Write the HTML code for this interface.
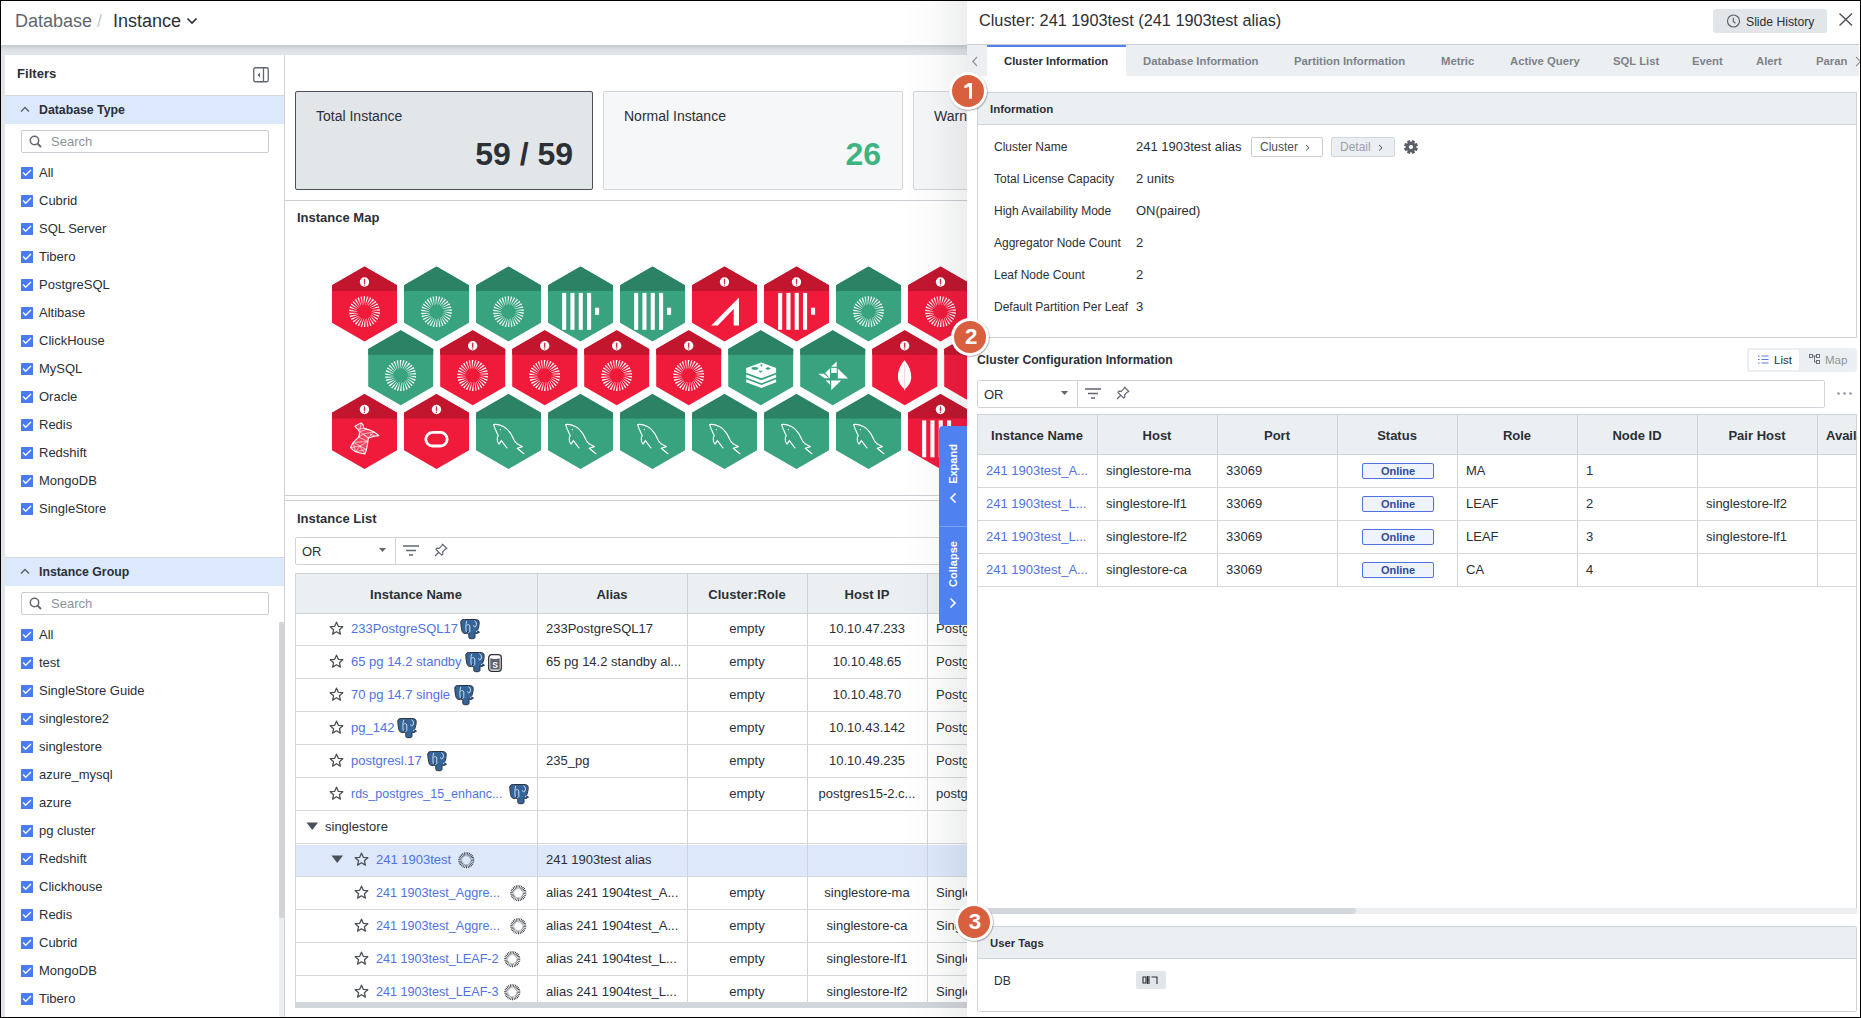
<!DOCTYPE html><html><head><meta charset="utf-8"><style>
*{box-sizing:border-box;margin:0;padding:0}
html,body{width:1861px;height:1018px;overflow:hidden;background:#fff}
body{position:relative;font-family:"Liberation Sans",sans-serif;color:#2b2f36}
.abs{position:absolute}
.t{position:absolute;white-space:nowrap}
.b{font-weight:bold}
.frame{position:absolute;left:0;top:0;width:1861px;height:1018px;border:1px solid #000;z-index:100;pointer-events:none}
.cb{position:absolute;width:12px;height:12px;background:#4a7cf0;border-radius:0.5px}
.lbl{position:absolute;font-size:13px;height:20px;line-height:20px;white-space:nowrap;color:#2b2f36}
</style></head><body>
<div class="frame"></div>
<div class="t" style="left:15px;top:10px;height:22px;line-height:22px;font-size:18px;color:#5f6670">Database</div>
<div class="t" style="left:97px;top:10px;height:22px;line-height:22px;font-size:18px;color:#c3c7cd">/</div>
<div class="t" style="left:113px;top:10px;height:22px;line-height:22px;font-size:18px;color:#2b3038">Instance</div>
<svg class="abs" style="left:185px;top:16px" width="14" height="10"><path d="M2.5 2.5 L7 7 L11.5 2.5" fill="none" stroke="#2b3038" stroke-width="1.6"/></svg>
<div class="abs" style="left:0;top:45px;width:1861px;height:10px;background:linear-gradient(#c6c9cd,#dfe2e5 50%,#e3e6e9)"></div>
<div class="abs" style="left:0;top:55px;width:5px;height:963px;background:#e3e6e9"></div>
<div class="abs" style="left:5px;top:55px;width:279px;height:963px;background:#fff"></div>
<div class="abs" style="left:284px;top:55px;width:1px;height:963px;background:#cfd2d7"></div>
<div class="t b" style="left:17px;top:64px;height:20px;line-height:20px;font-size:13.1px;color:#2b2f36">Filters</div>
<svg class="abs" style="left:253px;top:67px" width="16" height="16"><rect x="0.75" y="0.75" width="14.5" height="14" rx="1.5" fill="none" stroke="#5f6670" stroke-width="1.3"/><line x1="10.5" y1="1" x2="10.5" y2="15" stroke="#5f6670" stroke-width="1.3"/><path d="M7 5.5 L4.5 8 L7 10.5Z" fill="#5f6670"/></svg>
<div class="abs" style="left:5px;top:95px;width:279px;height:1px;background:#d5d8dc"></div>
<div class="abs" style="left:5px;top:96px;width:279px;height:28px;background:#dce8fc"></div>
<svg class="abs" style="left:19px;top:105px" width="12" height="8"><path d="M2 6.5 L6 2.5 L10 6.5" fill="none" stroke="#5f6670" stroke-width="1.5"/></svg>
<div class="t b" style="left:39px;top:100px;height:20px;line-height:20px;font-size:12.3px;color:#2b2f36">Database Type</div>
<div class="abs" style="left:21px;top:130px;width:248px;height:23px;border:1px solid #c9ccd1;border-radius:2px;background:#fff"></div>
<svg class="abs" style="left:29px;top:135px" width="14" height="14"><circle cx="5.5" cy="5.5" r="4.2" fill="none" stroke="#5f6670" stroke-width="1.5"/><line x1="8.6" y1="8.6" x2="12" y2="12" stroke="#5f6670" stroke-width="1.8"/></svg>
<div class="t" style="left:51px;top:131px;height:21px;line-height:21px;font-size:13px;color:#8d939b">Search</div>
<div class="cb" style="left:21px;top:167px"><svg width="12" height="12" style="position:absolute;left:0;top:0"><path d="M2.1 5.6 L4.7 8.2 L9.9 3.1" fill="none" stroke="#fff" stroke-width="1.35"/></svg></div>
<div class="lbl" style="left:39px;top:163px">All</div>
<div class="cb" style="left:21px;top:195px"><svg width="12" height="12" style="position:absolute;left:0;top:0"><path d="M2.1 5.6 L4.7 8.2 L9.9 3.1" fill="none" stroke="#fff" stroke-width="1.35"/></svg></div>
<div class="lbl" style="left:39px;top:191px">Cubrid</div>
<div class="cb" style="left:21px;top:223px"><svg width="12" height="12" style="position:absolute;left:0;top:0"><path d="M2.1 5.6 L4.7 8.2 L9.9 3.1" fill="none" stroke="#fff" stroke-width="1.35"/></svg></div>
<div class="lbl" style="left:39px;top:219px">SQL Server</div>
<div class="cb" style="left:21px;top:251px"><svg width="12" height="12" style="position:absolute;left:0;top:0"><path d="M2.1 5.6 L4.7 8.2 L9.9 3.1" fill="none" stroke="#fff" stroke-width="1.35"/></svg></div>
<div class="lbl" style="left:39px;top:247px">Tibero</div>
<div class="cb" style="left:21px;top:279px"><svg width="12" height="12" style="position:absolute;left:0;top:0"><path d="M2.1 5.6 L4.7 8.2 L9.9 3.1" fill="none" stroke="#fff" stroke-width="1.35"/></svg></div>
<div class="lbl" style="left:39px;top:275px">PostgreSQL</div>
<div class="cb" style="left:21px;top:307px"><svg width="12" height="12" style="position:absolute;left:0;top:0"><path d="M2.1 5.6 L4.7 8.2 L9.9 3.1" fill="none" stroke="#fff" stroke-width="1.35"/></svg></div>
<div class="lbl" style="left:39px;top:303px">Altibase</div>
<div class="cb" style="left:21px;top:335px"><svg width="12" height="12" style="position:absolute;left:0;top:0"><path d="M2.1 5.6 L4.7 8.2 L9.9 3.1" fill="none" stroke="#fff" stroke-width="1.35"/></svg></div>
<div class="lbl" style="left:39px;top:331px">ClickHouse</div>
<div class="cb" style="left:21px;top:363px"><svg width="12" height="12" style="position:absolute;left:0;top:0"><path d="M2.1 5.6 L4.7 8.2 L9.9 3.1" fill="none" stroke="#fff" stroke-width="1.35"/></svg></div>
<div class="lbl" style="left:39px;top:359px">MySQL</div>
<div class="cb" style="left:21px;top:391px"><svg width="12" height="12" style="position:absolute;left:0;top:0"><path d="M2.1 5.6 L4.7 8.2 L9.9 3.1" fill="none" stroke="#fff" stroke-width="1.35"/></svg></div>
<div class="lbl" style="left:39px;top:387px">Oracle</div>
<div class="cb" style="left:21px;top:419px"><svg width="12" height="12" style="position:absolute;left:0;top:0"><path d="M2.1 5.6 L4.7 8.2 L9.9 3.1" fill="none" stroke="#fff" stroke-width="1.35"/></svg></div>
<div class="lbl" style="left:39px;top:415px">Redis</div>
<div class="cb" style="left:21px;top:447px"><svg width="12" height="12" style="position:absolute;left:0;top:0"><path d="M2.1 5.6 L4.7 8.2 L9.9 3.1" fill="none" stroke="#fff" stroke-width="1.35"/></svg></div>
<div class="lbl" style="left:39px;top:443px">Redshift</div>
<div class="cb" style="left:21px;top:475px"><svg width="12" height="12" style="position:absolute;left:0;top:0"><path d="M2.1 5.6 L4.7 8.2 L9.9 3.1" fill="none" stroke="#fff" stroke-width="1.35"/></svg></div>
<div class="lbl" style="left:39px;top:471px">MongoDB</div>
<div class="cb" style="left:21px;top:503px"><svg width="12" height="12" style="position:absolute;left:0;top:0"><path d="M2.1 5.6 L4.7 8.2 L9.9 3.1" fill="none" stroke="#fff" stroke-width="1.35"/></svg></div>
<div class="lbl" style="left:39px;top:499px">SingleStore</div>
<div class="abs" style="left:5px;top:557px;width:279px;height:1px;background:#d5d8dc"></div>
<div class="abs" style="left:5px;top:558px;width:279px;height:28px;background:#dce8fc"></div>
<svg class="abs" style="left:19px;top:567px" width="12" height="8"><path d="M2 6.5 L6 2.5 L10 6.5" fill="none" stroke="#5f6670" stroke-width="1.5"/></svg>
<div class="t b" style="left:39px;top:562px;height:20px;line-height:20px;font-size:12.3px;color:#2b2f36">Instance Group</div>
<div class="abs" style="left:21px;top:592px;width:248px;height:23px;border:1px solid #c9ccd1;border-radius:2px;background:#fff"></div>
<svg class="abs" style="left:29px;top:597px" width="14" height="14"><circle cx="5.5" cy="5.5" r="4.2" fill="none" stroke="#5f6670" stroke-width="1.5"/><line x1="8.6" y1="8.6" x2="12" y2="12" stroke="#5f6670" stroke-width="1.8"/></svg>
<div class="t" style="left:51px;top:593px;height:21px;line-height:21px;font-size:13px;color:#8d939b">Search</div>
<div class="cb" style="left:21px;top:629px"><svg width="12" height="12" style="position:absolute;left:0;top:0"><path d="M2.1 5.6 L4.7 8.2 L9.9 3.1" fill="none" stroke="#fff" stroke-width="1.35"/></svg></div>
<div class="lbl" style="left:39px;top:625px">All</div>
<div class="cb" style="left:21px;top:657px"><svg width="12" height="12" style="position:absolute;left:0;top:0"><path d="M2.1 5.6 L4.7 8.2 L9.9 3.1" fill="none" stroke="#fff" stroke-width="1.35"/></svg></div>
<div class="lbl" style="left:39px;top:653px">test</div>
<div class="cb" style="left:21px;top:685px"><svg width="12" height="12" style="position:absolute;left:0;top:0"><path d="M2.1 5.6 L4.7 8.2 L9.9 3.1" fill="none" stroke="#fff" stroke-width="1.35"/></svg></div>
<div class="lbl" style="left:39px;top:681px">SingleStore Guide</div>
<div class="cb" style="left:21px;top:713px"><svg width="12" height="12" style="position:absolute;left:0;top:0"><path d="M2.1 5.6 L4.7 8.2 L9.9 3.1" fill="none" stroke="#fff" stroke-width="1.35"/></svg></div>
<div class="lbl" style="left:39px;top:709px">singlestore2</div>
<div class="cb" style="left:21px;top:741px"><svg width="12" height="12" style="position:absolute;left:0;top:0"><path d="M2.1 5.6 L4.7 8.2 L9.9 3.1" fill="none" stroke="#fff" stroke-width="1.35"/></svg></div>
<div class="lbl" style="left:39px;top:737px">singlestore</div>
<div class="cb" style="left:21px;top:769px"><svg width="12" height="12" style="position:absolute;left:0;top:0"><path d="M2.1 5.6 L4.7 8.2 L9.9 3.1" fill="none" stroke="#fff" stroke-width="1.35"/></svg></div>
<div class="lbl" style="left:39px;top:765px">azure_mysql</div>
<div class="cb" style="left:21px;top:797px"><svg width="12" height="12" style="position:absolute;left:0;top:0"><path d="M2.1 5.6 L4.7 8.2 L9.9 3.1" fill="none" stroke="#fff" stroke-width="1.35"/></svg></div>
<div class="lbl" style="left:39px;top:793px">azure</div>
<div class="cb" style="left:21px;top:825px"><svg width="12" height="12" style="position:absolute;left:0;top:0"><path d="M2.1 5.6 L4.7 8.2 L9.9 3.1" fill="none" stroke="#fff" stroke-width="1.35"/></svg></div>
<div class="lbl" style="left:39px;top:821px">pg cluster</div>
<div class="cb" style="left:21px;top:853px"><svg width="12" height="12" style="position:absolute;left:0;top:0"><path d="M2.1 5.6 L4.7 8.2 L9.9 3.1" fill="none" stroke="#fff" stroke-width="1.35"/></svg></div>
<div class="lbl" style="left:39px;top:849px">Redshift</div>
<div class="cb" style="left:21px;top:881px"><svg width="12" height="12" style="position:absolute;left:0;top:0"><path d="M2.1 5.6 L4.7 8.2 L9.9 3.1" fill="none" stroke="#fff" stroke-width="1.35"/></svg></div>
<div class="lbl" style="left:39px;top:877px">Clickhouse</div>
<div class="cb" style="left:21px;top:909px"><svg width="12" height="12" style="position:absolute;left:0;top:0"><path d="M2.1 5.6 L4.7 8.2 L9.9 3.1" fill="none" stroke="#fff" stroke-width="1.35"/></svg></div>
<div class="lbl" style="left:39px;top:905px">Redis</div>
<div class="cb" style="left:21px;top:937px"><svg width="12" height="12" style="position:absolute;left:0;top:0"><path d="M2.1 5.6 L4.7 8.2 L9.9 3.1" fill="none" stroke="#fff" stroke-width="1.35"/></svg></div>
<div class="lbl" style="left:39px;top:933px">Cubrid</div>
<div class="cb" style="left:21px;top:965px"><svg width="12" height="12" style="position:absolute;left:0;top:0"><path d="M2.1 5.6 L4.7 8.2 L9.9 3.1" fill="none" stroke="#fff" stroke-width="1.35"/></svg></div>
<div class="lbl" style="left:39px;top:961px">MongoDB</div>
<div class="cb" style="left:21px;top:993px"><svg width="12" height="12" style="position:absolute;left:0;top:0"><path d="M2.1 5.6 L4.7 8.2 L9.9 3.1" fill="none" stroke="#fff" stroke-width="1.35"/></svg></div>
<div class="lbl" style="left:39px;top:989px">Tibero</div>
<div class="abs" style="left:279px;top:622px;width:5px;height:395px;background:#eceff1"></div>
<div class="abs" style="left:279px;top:622px;width:5px;height:296px;background:#d2d4d8;border-radius:2px"></div>
<div class="abs" style="left:285px;top:55px;width:682px;height:963px;background:#fff"></div>
<div class="abs" style="left:295px;top:91px;width:298px;height:99px;background:#e3e6e9;border:1px solid #4b5058;border-radius:2px"></div>
<div class="t" style="left:316px;top:106px;height:20px;line-height:20px;font-size:14px;color:#2b2f36">Total Instance</div>
<div class="t b" style="right:1288px;top:136px;height:36px;line-height:36px;font-size:32px;color:#2b2f36">59 / 59</div>
<div class="abs" style="left:603px;top:91px;width:300px;height:99px;background:#f6f7f9;border:1px solid #d3d6db;border-radius:2px"></div>
<div class="t" style="left:624px;top:106px;height:20px;line-height:20px;font-size:14px;color:#2b2f36">Normal Instance</div>
<div class="t b" style="right:980px;top:136px;height:36px;line-height:36px;font-size:32px;color:#3db47f">26</div>
<div class="abs" style="left:913px;top:91px;width:300px;height:99px;background:#f6f7f9;border:1px solid #d3d6db;border-radius:2px"></div>
<div class="t" style="left:934px;top:106px;height:20px;line-height:20px;font-size:14px;color:#2b2f36">Warning Instance</div>
<div class="abs" style="left:285px;top:200px;width:682px;height:1px;background:#cbced3"></div>
<div class="t b" style="left:297px;top:208px;height:20px;line-height:20px;font-size:13px;color:#2b2f36">Instance Map</div>
<div class="abs" style="left:285px;top:495px;width:682px;height:1px;background:#cbced3"></div>
<div class="abs" style="left:285px;top:500px;width:682px;height:1px;background:#cbced3"></div>
<svg class="abs" style="left:0;top:0" width="967" height="495" viewBox="0 0 967 495"><g transform="translate(332.0,266.5)"><polygon points="32.5,0 65,18.75 65,56.25 32.5,75 0,56.25 0,18.75" fill="#f01a3b"/><polygon points="32.5,0 65,18.75 65,24.4 0,24.4 0,18.75" fill="#c2152e"/><path d="M39.50 45.32L39.50 45.08L47.90 45.99L47.75 47.48ZM39.32 46.77L39.37 46.54L47.40 49.18L46.94 50.60ZM38.85 48.16L38.94 47.94L46.24 52.19L45.50 53.49ZM38.09 49.41L38.23 49.22L44.49 54.89L43.49 56.01ZM37.09 50.48L37.27 50.32L42.22 57.17L41.01 58.06ZM35.90 51.32L36.10 51.20L39.51 58.93L38.15 59.55ZM34.55 51.89L34.78 51.82L36.51 60.09L35.04 60.41ZM33.11 52.17L33.35 52.15L33.32 60.60L31.82 60.60ZM31.65 52.15L31.89 52.17L30.10 60.43L28.63 60.13ZM30.22 51.82L30.45 51.89L26.99 59.60L25.62 59.00ZM28.90 51.20L29.10 51.32L24.12 58.14L22.90 57.26ZM27.73 50.32L27.91 50.48L21.61 56.11L20.60 55.00ZM26.77 49.22L26.91 49.41L19.58 53.61L18.82 52.32ZM26.06 47.94L26.15 48.16L18.11 50.74L17.64 49.32ZM25.63 46.54L25.68 46.77L17.27 47.63L17.11 46.14ZM25.50 45.08L25.50 45.32L17.10 44.41L17.25 42.92ZM25.68 43.63L25.63 43.86L17.60 41.22L18.06 39.80ZM26.15 42.24L26.06 42.46L18.76 38.21L19.50 36.91ZM26.91 40.99L26.77 41.18L20.51 35.51L21.51 34.39ZM27.91 39.92L27.73 40.08L22.78 33.23L23.99 32.34ZM29.10 39.08L28.90 39.20L25.49 31.47L26.85 30.85ZM30.45 38.51L30.22 38.58L28.49 30.31L29.96 29.99ZM31.89 38.23L31.65 38.25L31.68 29.80L33.18 29.80ZM33.35 38.25L33.11 38.23L34.90 29.97L36.37 30.27ZM34.78 38.58L34.55 38.51L38.01 30.80L39.38 31.40ZM36.10 39.20L35.90 39.08L40.88 32.26L42.10 33.14ZM37.27 40.08L37.09 39.92L43.39 34.29L44.40 35.40ZM38.23 41.18L38.09 40.99L45.42 36.79L46.18 38.08ZM38.94 42.46L38.85 42.24L46.89 39.66L47.36 41.08ZM39.37 43.86L39.32 43.63L47.73 42.77L47.89 44.26Z" fill="#fff"/><circle cx="32.5" cy="15.5" r="4.7" fill="#fff"/><path d="M32.5 12.9 L32.5 16.9" stroke="#c8354a" stroke-width="1.35" stroke-linecap="round"/><circle cx="32.5" cy="18.6" r="0.7" fill="#c8354a"/></g><g transform="translate(404.0,266.5)"><polygon points="32.5,0 65,18.75 65,56.25 32.5,75 0,56.25 0,18.75" fill="#38a37e"/><polygon points="32.5,0 65,18.75 65,24.4 0,24.4 0,18.75" fill="#2c8264"/><path d="M39.50 45.32L39.50 45.08L47.90 45.99L47.75 47.48ZM39.32 46.77L39.37 46.54L47.40 49.18L46.94 50.60ZM38.85 48.16L38.94 47.94L46.24 52.19L45.50 53.49ZM38.09 49.41L38.23 49.22L44.49 54.89L43.49 56.01ZM37.09 50.48L37.27 50.32L42.22 57.17L41.01 58.06ZM35.90 51.32L36.10 51.20L39.51 58.93L38.15 59.55ZM34.55 51.89L34.78 51.82L36.51 60.09L35.04 60.41ZM33.11 52.17L33.35 52.15L33.32 60.60L31.82 60.60ZM31.65 52.15L31.89 52.17L30.10 60.43L28.63 60.13ZM30.22 51.82L30.45 51.89L26.99 59.60L25.62 59.00ZM28.90 51.20L29.10 51.32L24.12 58.14L22.90 57.26ZM27.73 50.32L27.91 50.48L21.61 56.11L20.60 55.00ZM26.77 49.22L26.91 49.41L19.58 53.61L18.82 52.32ZM26.06 47.94L26.15 48.16L18.11 50.74L17.64 49.32ZM25.63 46.54L25.68 46.77L17.27 47.63L17.11 46.14ZM25.50 45.08L25.50 45.32L17.10 44.41L17.25 42.92ZM25.68 43.63L25.63 43.86L17.60 41.22L18.06 39.80ZM26.15 42.24L26.06 42.46L18.76 38.21L19.50 36.91ZM26.91 40.99L26.77 41.18L20.51 35.51L21.51 34.39ZM27.91 39.92L27.73 40.08L22.78 33.23L23.99 32.34ZM29.10 39.08L28.90 39.20L25.49 31.47L26.85 30.85ZM30.45 38.51L30.22 38.58L28.49 30.31L29.96 29.99ZM31.89 38.23L31.65 38.25L31.68 29.80L33.18 29.80ZM33.35 38.25L33.11 38.23L34.90 29.97L36.37 30.27ZM34.78 38.58L34.55 38.51L38.01 30.80L39.38 31.40ZM36.10 39.20L35.90 39.08L40.88 32.26L42.10 33.14ZM37.27 40.08L37.09 39.92L43.39 34.29L44.40 35.40ZM38.23 41.18L38.09 40.99L45.42 36.79L46.18 38.08ZM38.94 42.46L38.85 42.24L46.89 39.66L47.36 41.08ZM39.37 43.86L39.32 43.63L47.73 42.77L47.89 44.26Z" fill="#fff"/></g><g transform="translate(476.0,266.5)"><polygon points="32.5,0 65,18.75 65,56.25 32.5,75 0,56.25 0,18.75" fill="#38a37e"/><polygon points="32.5,0 65,18.75 65,24.4 0,24.4 0,18.75" fill="#2c8264"/><path d="M39.50 45.32L39.50 45.08L47.90 45.99L47.75 47.48ZM39.32 46.77L39.37 46.54L47.40 49.18L46.94 50.60ZM38.85 48.16L38.94 47.94L46.24 52.19L45.50 53.49ZM38.09 49.41L38.23 49.22L44.49 54.89L43.49 56.01ZM37.09 50.48L37.27 50.32L42.22 57.17L41.01 58.06ZM35.90 51.32L36.10 51.20L39.51 58.93L38.15 59.55ZM34.55 51.89L34.78 51.82L36.51 60.09L35.04 60.41ZM33.11 52.17L33.35 52.15L33.32 60.60L31.82 60.60ZM31.65 52.15L31.89 52.17L30.10 60.43L28.63 60.13ZM30.22 51.82L30.45 51.89L26.99 59.60L25.62 59.00ZM28.90 51.20L29.10 51.32L24.12 58.14L22.90 57.26ZM27.73 50.32L27.91 50.48L21.61 56.11L20.60 55.00ZM26.77 49.22L26.91 49.41L19.58 53.61L18.82 52.32ZM26.06 47.94L26.15 48.16L18.11 50.74L17.64 49.32ZM25.63 46.54L25.68 46.77L17.27 47.63L17.11 46.14ZM25.50 45.08L25.50 45.32L17.10 44.41L17.25 42.92ZM25.68 43.63L25.63 43.86L17.60 41.22L18.06 39.80ZM26.15 42.24L26.06 42.46L18.76 38.21L19.50 36.91ZM26.91 40.99L26.77 41.18L20.51 35.51L21.51 34.39ZM27.91 39.92L27.73 40.08L22.78 33.23L23.99 32.34ZM29.10 39.08L28.90 39.20L25.49 31.47L26.85 30.85ZM30.45 38.51L30.22 38.58L28.49 30.31L29.96 29.99ZM31.89 38.23L31.65 38.25L31.68 29.80L33.18 29.80ZM33.35 38.25L33.11 38.23L34.90 29.97L36.37 30.27ZM34.78 38.58L34.55 38.51L38.01 30.80L39.38 31.40ZM36.10 39.20L35.90 39.08L40.88 32.26L42.10 33.14ZM37.27 40.08L37.09 39.92L43.39 34.29L44.40 35.40ZM38.23 41.18L38.09 40.99L45.42 36.79L46.18 38.08ZM38.94 42.46L38.85 42.24L46.89 39.66L47.36 41.08ZM39.37 43.86L39.32 43.63L47.73 42.77L47.89 44.26Z" fill="#fff"/></g><g transform="translate(548.0,266.5)"><polygon points="32.5,0 65,18.75 65,56.25 32.5,75 0,56.25 0,18.75" fill="#38a37e"/><polygon points="32.5,0 65,18.75 65,24.4 0,24.4 0,18.75" fill="#2c8264"/><rect x="14.1" y="26.4" width="4.1" height="36.9" fill="#fff"/><rect x="22.4" y="26.4" width="4.1" height="36.9" fill="#fff"/><rect x="30.7" y="26.4" width="4.1" height="36.9" fill="#fff"/><rect x="39.0" y="26.4" width="4.1" height="36.9" fill="#fff"/><rect x="47" y="41.2" width="4.1" height="7.1" fill="#fff"/></g><g transform="translate(620.0,266.5)"><polygon points="32.5,0 65,18.75 65,56.25 32.5,75 0,56.25 0,18.75" fill="#38a37e"/><polygon points="32.5,0 65,18.75 65,24.4 0,24.4 0,18.75" fill="#2c8264"/><rect x="14.1" y="26.4" width="4.1" height="36.9" fill="#fff"/><rect x="22.4" y="26.4" width="4.1" height="36.9" fill="#fff"/><rect x="30.7" y="26.4" width="4.1" height="36.9" fill="#fff"/><rect x="39.0" y="26.4" width="4.1" height="36.9" fill="#fff"/><rect x="47" y="41.2" width="4.1" height="7.1" fill="#fff"/></g><g transform="translate(692.0,266.5)"><polygon points="32.5,0 65,18.75 65,56.25 32.5,75 0,56.25 0,18.75" fill="#f01a3b"/><polygon points="32.5,0 65,18.75 65,24.4 0,24.4 0,18.75" fill="#c2152e"/><path d="M19.3 58.9 L47 31.1 L47 58.9 L41.7 58.9 L41.7 42.5 L25.8 58.9Z" fill="#fff"/><circle cx="32.5" cy="15.5" r="4.7" fill="#fff"/><path d="M32.5 12.9 L32.5 16.9" stroke="#c8354a" stroke-width="1.35" stroke-linecap="round"/><circle cx="32.5" cy="18.6" r="0.7" fill="#c8354a"/></g><g transform="translate(764.0,266.5)"><polygon points="32.5,0 65,18.75 65,56.25 32.5,75 0,56.25 0,18.75" fill="#f01a3b"/><polygon points="32.5,0 65,18.75 65,24.4 0,24.4 0,18.75" fill="#c2152e"/><rect x="14.1" y="26.4" width="4.1" height="36.9" fill="#fff"/><rect x="22.4" y="26.4" width="4.1" height="36.9" fill="#fff"/><rect x="30.7" y="26.4" width="4.1" height="36.9" fill="#fff"/><rect x="39.0" y="26.4" width="4.1" height="36.9" fill="#fff"/><rect x="47" y="41.2" width="4.1" height="7.1" fill="#fff"/><circle cx="32.5" cy="15.5" r="4.7" fill="#fff"/><path d="M32.5 12.9 L32.5 16.9" stroke="#c8354a" stroke-width="1.35" stroke-linecap="round"/><circle cx="32.5" cy="18.6" r="0.7" fill="#c8354a"/></g><g transform="translate(836.0,266.5)"><polygon points="32.5,0 65,18.75 65,56.25 32.5,75 0,56.25 0,18.75" fill="#38a37e"/><polygon points="32.5,0 65,18.75 65,24.4 0,24.4 0,18.75" fill="#2c8264"/><path d="M39.50 45.32L39.50 45.08L47.90 45.99L47.75 47.48ZM39.32 46.77L39.37 46.54L47.40 49.18L46.94 50.60ZM38.85 48.16L38.94 47.94L46.24 52.19L45.50 53.49ZM38.09 49.41L38.23 49.22L44.49 54.89L43.49 56.01ZM37.09 50.48L37.27 50.32L42.22 57.17L41.01 58.06ZM35.90 51.32L36.10 51.20L39.51 58.93L38.15 59.55ZM34.55 51.89L34.78 51.82L36.51 60.09L35.04 60.41ZM33.11 52.17L33.35 52.15L33.32 60.60L31.82 60.60ZM31.65 52.15L31.89 52.17L30.10 60.43L28.63 60.13ZM30.22 51.82L30.45 51.89L26.99 59.60L25.62 59.00ZM28.90 51.20L29.10 51.32L24.12 58.14L22.90 57.26ZM27.73 50.32L27.91 50.48L21.61 56.11L20.60 55.00ZM26.77 49.22L26.91 49.41L19.58 53.61L18.82 52.32ZM26.06 47.94L26.15 48.16L18.11 50.74L17.64 49.32ZM25.63 46.54L25.68 46.77L17.27 47.63L17.11 46.14ZM25.50 45.08L25.50 45.32L17.10 44.41L17.25 42.92ZM25.68 43.63L25.63 43.86L17.60 41.22L18.06 39.80ZM26.15 42.24L26.06 42.46L18.76 38.21L19.50 36.91ZM26.91 40.99L26.77 41.18L20.51 35.51L21.51 34.39ZM27.91 39.92L27.73 40.08L22.78 33.23L23.99 32.34ZM29.10 39.08L28.90 39.20L25.49 31.47L26.85 30.85ZM30.45 38.51L30.22 38.58L28.49 30.31L29.96 29.99ZM31.89 38.23L31.65 38.25L31.68 29.80L33.18 29.80ZM33.35 38.25L33.11 38.23L34.90 29.97L36.37 30.27ZM34.78 38.58L34.55 38.51L38.01 30.80L39.38 31.40ZM36.10 39.20L35.90 39.08L40.88 32.26L42.10 33.14ZM37.27 40.08L37.09 39.92L43.39 34.29L44.40 35.40ZM38.23 41.18L38.09 40.99L45.42 36.79L46.18 38.08ZM38.94 42.46L38.85 42.24L46.89 39.66L47.36 41.08ZM39.37 43.86L39.32 43.63L47.73 42.77L47.89 44.26Z" fill="#fff"/></g><g transform="translate(908.0,266.5)"><polygon points="32.5,0 65,18.75 65,56.25 32.5,75 0,56.25 0,18.75" fill="#f01a3b"/><polygon points="32.5,0 65,18.75 65,24.4 0,24.4 0,18.75" fill="#c2152e"/><path d="M39.50 45.32L39.50 45.08L47.90 45.99L47.75 47.48ZM39.32 46.77L39.37 46.54L47.40 49.18L46.94 50.60ZM38.85 48.16L38.94 47.94L46.24 52.19L45.50 53.49ZM38.09 49.41L38.23 49.22L44.49 54.89L43.49 56.01ZM37.09 50.48L37.27 50.32L42.22 57.17L41.01 58.06ZM35.90 51.32L36.10 51.20L39.51 58.93L38.15 59.55ZM34.55 51.89L34.78 51.82L36.51 60.09L35.04 60.41ZM33.11 52.17L33.35 52.15L33.32 60.60L31.82 60.60ZM31.65 52.15L31.89 52.17L30.10 60.43L28.63 60.13ZM30.22 51.82L30.45 51.89L26.99 59.60L25.62 59.00ZM28.90 51.20L29.10 51.32L24.12 58.14L22.90 57.26ZM27.73 50.32L27.91 50.48L21.61 56.11L20.60 55.00ZM26.77 49.22L26.91 49.41L19.58 53.61L18.82 52.32ZM26.06 47.94L26.15 48.16L18.11 50.74L17.64 49.32ZM25.63 46.54L25.68 46.77L17.27 47.63L17.11 46.14ZM25.50 45.08L25.50 45.32L17.10 44.41L17.25 42.92ZM25.68 43.63L25.63 43.86L17.60 41.22L18.06 39.80ZM26.15 42.24L26.06 42.46L18.76 38.21L19.50 36.91ZM26.91 40.99L26.77 41.18L20.51 35.51L21.51 34.39ZM27.91 39.92L27.73 40.08L22.78 33.23L23.99 32.34ZM29.10 39.08L28.90 39.20L25.49 31.47L26.85 30.85ZM30.45 38.51L30.22 38.58L28.49 30.31L29.96 29.99ZM31.89 38.23L31.65 38.25L31.68 29.80L33.18 29.80ZM33.35 38.25L33.11 38.23L34.90 29.97L36.37 30.27ZM34.78 38.58L34.55 38.51L38.01 30.80L39.38 31.40ZM36.10 39.20L35.90 39.08L40.88 32.26L42.10 33.14ZM37.27 40.08L37.09 39.92L43.39 34.29L44.40 35.40ZM38.23 41.18L38.09 40.99L45.42 36.79L46.18 38.08ZM38.94 42.46L38.85 42.24L46.89 39.66L47.36 41.08ZM39.37 43.86L39.32 43.63L47.73 42.77L47.89 44.26Z" fill="#fff"/><circle cx="32.5" cy="15.5" r="4.7" fill="#fff"/><path d="M32.5 12.9 L32.5 16.9" stroke="#c8354a" stroke-width="1.35" stroke-linecap="round"/><circle cx="32.5" cy="18.6" r="0.7" fill="#c8354a"/></g><g transform="translate(368.2,330.3)"><polygon points="32.5,0 65,18.75 65,56.25 32.5,75 0,56.25 0,18.75" fill="#38a37e"/><polygon points="32.5,0 65,18.75 65,24.4 0,24.4 0,18.75" fill="#2c8264"/><path d="M39.50 45.32L39.50 45.08L47.90 45.99L47.75 47.48ZM39.32 46.77L39.37 46.54L47.40 49.18L46.94 50.60ZM38.85 48.16L38.94 47.94L46.24 52.19L45.50 53.49ZM38.09 49.41L38.23 49.22L44.49 54.89L43.49 56.01ZM37.09 50.48L37.27 50.32L42.22 57.17L41.01 58.06ZM35.90 51.32L36.10 51.20L39.51 58.93L38.15 59.55ZM34.55 51.89L34.78 51.82L36.51 60.09L35.04 60.41ZM33.11 52.17L33.35 52.15L33.32 60.60L31.82 60.60ZM31.65 52.15L31.89 52.17L30.10 60.43L28.63 60.13ZM30.22 51.82L30.45 51.89L26.99 59.60L25.62 59.00ZM28.90 51.20L29.10 51.32L24.12 58.14L22.90 57.26ZM27.73 50.32L27.91 50.48L21.61 56.11L20.60 55.00ZM26.77 49.22L26.91 49.41L19.58 53.61L18.82 52.32ZM26.06 47.94L26.15 48.16L18.11 50.74L17.64 49.32ZM25.63 46.54L25.68 46.77L17.27 47.63L17.11 46.14ZM25.50 45.08L25.50 45.32L17.10 44.41L17.25 42.92ZM25.68 43.63L25.63 43.86L17.60 41.22L18.06 39.80ZM26.15 42.24L26.06 42.46L18.76 38.21L19.50 36.91ZM26.91 40.99L26.77 41.18L20.51 35.51L21.51 34.39ZM27.91 39.92L27.73 40.08L22.78 33.23L23.99 32.34ZM29.10 39.08L28.90 39.20L25.49 31.47L26.85 30.85ZM30.45 38.51L30.22 38.58L28.49 30.31L29.96 29.99ZM31.89 38.23L31.65 38.25L31.68 29.80L33.18 29.80ZM33.35 38.25L33.11 38.23L34.90 29.97L36.37 30.27ZM34.78 38.58L34.55 38.51L38.01 30.80L39.38 31.40ZM36.10 39.20L35.90 39.08L40.88 32.26L42.10 33.14ZM37.27 40.08L37.09 39.92L43.39 34.29L44.40 35.40ZM38.23 41.18L38.09 40.99L45.42 36.79L46.18 38.08ZM38.94 42.46L38.85 42.24L46.89 39.66L47.36 41.08ZM39.37 43.86L39.32 43.63L47.73 42.77L47.89 44.26Z" fill="#fff"/></g><g transform="translate(440.2,330.3)"><polygon points="32.5,0 65,18.75 65,56.25 32.5,75 0,56.25 0,18.75" fill="#f01a3b"/><polygon points="32.5,0 65,18.75 65,24.4 0,24.4 0,18.75" fill="#c2152e"/><path d="M39.50 45.32L39.50 45.08L47.90 45.99L47.75 47.48ZM39.32 46.77L39.37 46.54L47.40 49.18L46.94 50.60ZM38.85 48.16L38.94 47.94L46.24 52.19L45.50 53.49ZM38.09 49.41L38.23 49.22L44.49 54.89L43.49 56.01ZM37.09 50.48L37.27 50.32L42.22 57.17L41.01 58.06ZM35.90 51.32L36.10 51.20L39.51 58.93L38.15 59.55ZM34.55 51.89L34.78 51.82L36.51 60.09L35.04 60.41ZM33.11 52.17L33.35 52.15L33.32 60.60L31.82 60.60ZM31.65 52.15L31.89 52.17L30.10 60.43L28.63 60.13ZM30.22 51.82L30.45 51.89L26.99 59.60L25.62 59.00ZM28.90 51.20L29.10 51.32L24.12 58.14L22.90 57.26ZM27.73 50.32L27.91 50.48L21.61 56.11L20.60 55.00ZM26.77 49.22L26.91 49.41L19.58 53.61L18.82 52.32ZM26.06 47.94L26.15 48.16L18.11 50.74L17.64 49.32ZM25.63 46.54L25.68 46.77L17.27 47.63L17.11 46.14ZM25.50 45.08L25.50 45.32L17.10 44.41L17.25 42.92ZM25.68 43.63L25.63 43.86L17.60 41.22L18.06 39.80ZM26.15 42.24L26.06 42.46L18.76 38.21L19.50 36.91ZM26.91 40.99L26.77 41.18L20.51 35.51L21.51 34.39ZM27.91 39.92L27.73 40.08L22.78 33.23L23.99 32.34ZM29.10 39.08L28.90 39.20L25.49 31.47L26.85 30.85ZM30.45 38.51L30.22 38.58L28.49 30.31L29.96 29.99ZM31.89 38.23L31.65 38.25L31.68 29.80L33.18 29.80ZM33.35 38.25L33.11 38.23L34.90 29.97L36.37 30.27ZM34.78 38.58L34.55 38.51L38.01 30.80L39.38 31.40ZM36.10 39.20L35.90 39.08L40.88 32.26L42.10 33.14ZM37.27 40.08L37.09 39.92L43.39 34.29L44.40 35.40ZM38.23 41.18L38.09 40.99L45.42 36.79L46.18 38.08ZM38.94 42.46L38.85 42.24L46.89 39.66L47.36 41.08ZM39.37 43.86L39.32 43.63L47.73 42.77L47.89 44.26Z" fill="#fff"/><circle cx="32.5" cy="15.5" r="4.7" fill="#fff"/><path d="M32.5 12.9 L32.5 16.9" stroke="#c8354a" stroke-width="1.35" stroke-linecap="round"/><circle cx="32.5" cy="18.6" r="0.7" fill="#c8354a"/></g><g transform="translate(512.2,330.3)"><polygon points="32.5,0 65,18.75 65,56.25 32.5,75 0,56.25 0,18.75" fill="#f01a3b"/><polygon points="32.5,0 65,18.75 65,24.4 0,24.4 0,18.75" fill="#c2152e"/><path d="M39.50 45.32L39.50 45.08L47.90 45.99L47.75 47.48ZM39.32 46.77L39.37 46.54L47.40 49.18L46.94 50.60ZM38.85 48.16L38.94 47.94L46.24 52.19L45.50 53.49ZM38.09 49.41L38.23 49.22L44.49 54.89L43.49 56.01ZM37.09 50.48L37.27 50.32L42.22 57.17L41.01 58.06ZM35.90 51.32L36.10 51.20L39.51 58.93L38.15 59.55ZM34.55 51.89L34.78 51.82L36.51 60.09L35.04 60.41ZM33.11 52.17L33.35 52.15L33.32 60.60L31.82 60.60ZM31.65 52.15L31.89 52.17L30.10 60.43L28.63 60.13ZM30.22 51.82L30.45 51.89L26.99 59.60L25.62 59.00ZM28.90 51.20L29.10 51.32L24.12 58.14L22.90 57.26ZM27.73 50.32L27.91 50.48L21.61 56.11L20.60 55.00ZM26.77 49.22L26.91 49.41L19.58 53.61L18.82 52.32ZM26.06 47.94L26.15 48.16L18.11 50.74L17.64 49.32ZM25.63 46.54L25.68 46.77L17.27 47.63L17.11 46.14ZM25.50 45.08L25.50 45.32L17.10 44.41L17.25 42.92ZM25.68 43.63L25.63 43.86L17.60 41.22L18.06 39.80ZM26.15 42.24L26.06 42.46L18.76 38.21L19.50 36.91ZM26.91 40.99L26.77 41.18L20.51 35.51L21.51 34.39ZM27.91 39.92L27.73 40.08L22.78 33.23L23.99 32.34ZM29.10 39.08L28.90 39.20L25.49 31.47L26.85 30.85ZM30.45 38.51L30.22 38.58L28.49 30.31L29.96 29.99ZM31.89 38.23L31.65 38.25L31.68 29.80L33.18 29.80ZM33.35 38.25L33.11 38.23L34.90 29.97L36.37 30.27ZM34.78 38.58L34.55 38.51L38.01 30.80L39.38 31.40ZM36.10 39.20L35.90 39.08L40.88 32.26L42.10 33.14ZM37.27 40.08L37.09 39.92L43.39 34.29L44.40 35.40ZM38.23 41.18L38.09 40.99L45.42 36.79L46.18 38.08ZM38.94 42.46L38.85 42.24L46.89 39.66L47.36 41.08ZM39.37 43.86L39.32 43.63L47.73 42.77L47.89 44.26Z" fill="#fff"/><circle cx="32.5" cy="15.5" r="4.7" fill="#fff"/><path d="M32.5 12.9 L32.5 16.9" stroke="#c8354a" stroke-width="1.35" stroke-linecap="round"/><circle cx="32.5" cy="18.6" r="0.7" fill="#c8354a"/></g><g transform="translate(584.2,330.3)"><polygon points="32.5,0 65,18.75 65,56.25 32.5,75 0,56.25 0,18.75" fill="#f01a3b"/><polygon points="32.5,0 65,18.75 65,24.4 0,24.4 0,18.75" fill="#c2152e"/><path d="M39.50 45.32L39.50 45.08L47.90 45.99L47.75 47.48ZM39.32 46.77L39.37 46.54L47.40 49.18L46.94 50.60ZM38.85 48.16L38.94 47.94L46.24 52.19L45.50 53.49ZM38.09 49.41L38.23 49.22L44.49 54.89L43.49 56.01ZM37.09 50.48L37.27 50.32L42.22 57.17L41.01 58.06ZM35.90 51.32L36.10 51.20L39.51 58.93L38.15 59.55ZM34.55 51.89L34.78 51.82L36.51 60.09L35.04 60.41ZM33.11 52.17L33.35 52.15L33.32 60.60L31.82 60.60ZM31.65 52.15L31.89 52.17L30.10 60.43L28.63 60.13ZM30.22 51.82L30.45 51.89L26.99 59.60L25.62 59.00ZM28.90 51.20L29.10 51.32L24.12 58.14L22.90 57.26ZM27.73 50.32L27.91 50.48L21.61 56.11L20.60 55.00ZM26.77 49.22L26.91 49.41L19.58 53.61L18.82 52.32ZM26.06 47.94L26.15 48.16L18.11 50.74L17.64 49.32ZM25.63 46.54L25.68 46.77L17.27 47.63L17.11 46.14ZM25.50 45.08L25.50 45.32L17.10 44.41L17.25 42.92ZM25.68 43.63L25.63 43.86L17.60 41.22L18.06 39.80ZM26.15 42.24L26.06 42.46L18.76 38.21L19.50 36.91ZM26.91 40.99L26.77 41.18L20.51 35.51L21.51 34.39ZM27.91 39.92L27.73 40.08L22.78 33.23L23.99 32.34ZM29.10 39.08L28.90 39.20L25.49 31.47L26.85 30.85ZM30.45 38.51L30.22 38.58L28.49 30.31L29.96 29.99ZM31.89 38.23L31.65 38.25L31.68 29.80L33.18 29.80ZM33.35 38.25L33.11 38.23L34.90 29.97L36.37 30.27ZM34.78 38.58L34.55 38.51L38.01 30.80L39.38 31.40ZM36.10 39.20L35.90 39.08L40.88 32.26L42.10 33.14ZM37.27 40.08L37.09 39.92L43.39 34.29L44.40 35.40ZM38.23 41.18L38.09 40.99L45.42 36.79L46.18 38.08ZM38.94 42.46L38.85 42.24L46.89 39.66L47.36 41.08ZM39.37 43.86L39.32 43.63L47.73 42.77L47.89 44.26Z" fill="#fff"/><circle cx="32.5" cy="15.5" r="4.7" fill="#fff"/><path d="M32.5 12.9 L32.5 16.9" stroke="#c8354a" stroke-width="1.35" stroke-linecap="round"/><circle cx="32.5" cy="18.6" r="0.7" fill="#c8354a"/></g><g transform="translate(656.2,330.3)"><polygon points="32.5,0 65,18.75 65,56.25 32.5,75 0,56.25 0,18.75" fill="#f01a3b"/><polygon points="32.5,0 65,18.75 65,24.4 0,24.4 0,18.75" fill="#c2152e"/><path d="M39.50 45.32L39.50 45.08L47.90 45.99L47.75 47.48ZM39.32 46.77L39.37 46.54L47.40 49.18L46.94 50.60ZM38.85 48.16L38.94 47.94L46.24 52.19L45.50 53.49ZM38.09 49.41L38.23 49.22L44.49 54.89L43.49 56.01ZM37.09 50.48L37.27 50.32L42.22 57.17L41.01 58.06ZM35.90 51.32L36.10 51.20L39.51 58.93L38.15 59.55ZM34.55 51.89L34.78 51.82L36.51 60.09L35.04 60.41ZM33.11 52.17L33.35 52.15L33.32 60.60L31.82 60.60ZM31.65 52.15L31.89 52.17L30.10 60.43L28.63 60.13ZM30.22 51.82L30.45 51.89L26.99 59.60L25.62 59.00ZM28.90 51.20L29.10 51.32L24.12 58.14L22.90 57.26ZM27.73 50.32L27.91 50.48L21.61 56.11L20.60 55.00ZM26.77 49.22L26.91 49.41L19.58 53.61L18.82 52.32ZM26.06 47.94L26.15 48.16L18.11 50.74L17.64 49.32ZM25.63 46.54L25.68 46.77L17.27 47.63L17.11 46.14ZM25.50 45.08L25.50 45.32L17.10 44.41L17.25 42.92ZM25.68 43.63L25.63 43.86L17.60 41.22L18.06 39.80ZM26.15 42.24L26.06 42.46L18.76 38.21L19.50 36.91ZM26.91 40.99L26.77 41.18L20.51 35.51L21.51 34.39ZM27.91 39.92L27.73 40.08L22.78 33.23L23.99 32.34ZM29.10 39.08L28.90 39.20L25.49 31.47L26.85 30.85ZM30.45 38.51L30.22 38.58L28.49 30.31L29.96 29.99ZM31.89 38.23L31.65 38.25L31.68 29.80L33.18 29.80ZM33.35 38.25L33.11 38.23L34.90 29.97L36.37 30.27ZM34.78 38.58L34.55 38.51L38.01 30.80L39.38 31.40ZM36.10 39.20L35.90 39.08L40.88 32.26L42.10 33.14ZM37.27 40.08L37.09 39.92L43.39 34.29L44.40 35.40ZM38.23 41.18L38.09 40.99L45.42 36.79L46.18 38.08ZM38.94 42.46L38.85 42.24L46.89 39.66L47.36 41.08ZM39.37 43.86L39.32 43.63L47.73 42.77L47.89 44.26Z" fill="#fff"/><circle cx="32.5" cy="15.5" r="4.7" fill="#fff"/><path d="M32.5 12.9 L32.5 16.9" stroke="#c8354a" stroke-width="1.35" stroke-linecap="round"/><circle cx="32.5" cy="18.6" r="0.7" fill="#c8354a"/></g><g transform="translate(728.2,330.3)"><polygon points="32.5,0 65,18.75 65,56.25 32.5,75 0,56.25 0,18.75" fill="#38a37e"/><polygon points="32.5,0 65,18.75 65,24.4 0,24.4 0,18.75" fill="#2c8264"/><path d="M18 44.2 L18 47.2 L33.2 53 L47.9 47.2 L47.9 44.2 L33.2 50Z" fill="#fff"/><path d="M18 49 L18 52 L33.2 57.8 L47.9 52 L47.9 49 L33.2 54.8Z" fill="#fff"/><path d="M18 37.6 L33.2 32.2 L47.9 37.6 L47.9 42.5 L33.2 48 L18 42.5Z" fill="#fff"/><ellipse cx="26.6" cy="38.1" rx="3.3" ry="1.4" fill="#38a37e"/><path d="M39.8 36.6 L42.6 38.1 L39.8 39.6 L37 38.1Z" fill="#38a37e"/><path d="M31.8 34.2 L34.6 34.2 L33.2 36.6Z" fill="#38a37e"/><path d="M30 40.4 L34.8 40.4 L32.4 42.4Z" fill="#38a37e"/></g><g transform="translate(800.2,330.3)"><polygon points="32.5,0 65,18.75 65,56.25 32.5,75 0,56.25 0,18.75" fill="#38a37e"/><polygon points="32.5,0 65,18.75 65,24.4 0,24.4 0,18.75" fill="#2c8264"/><path d="M31 36.5 L36.5 31.3 L36.5 36.5Z" fill="#fff"/><rect x="31" y="37.6" width="5.5" height="5.1" fill="#fff"/><path d="M37.6 38.3 L47.9 48.3 L37.6 48.3Z" fill="#fff"/><path d="M25 42.7 L29.8 38 L29.8 47.9Z" fill="#fff"/><path d="M18 43.5 L23.6 43.5 L29.1 47.9 L24.3 47.9Z" fill="#fff"/><path d="M25.4 50.1 L29.8 50.1 L29.8 54.5Z" fill="#fff"/><path d="M31 50.1 L40.9 50.1 L31 60Z" fill="#fff"/></g><g transform="translate(872.2,330.3)"><polygon points="32.5,0 65,18.75 65,56.25 32.5,75 0,56.25 0,18.75" fill="#f01a3b"/><polygon points="32.5,0 65,18.75 65,24.4 0,24.4 0,18.75" fill="#c2152e"/><path d="M32.3 30 C27 36 25.5 42 25.8 47.5 C26 53 29.5 56.5 32 58.5 L32.2 60 L32.8 60 L33 58.5 C35.5 56.5 38.8 53 39 47.5 C39.2 42 37.5 36 32.3 30Z" fill="#fff"/><line x1="32.5" y1="34" x2="32.5" y2="57" stroke="#f01a3b" stroke-width="0.35" opacity="0.6"/><circle cx="32.5" cy="15.5" r="4.7" fill="#fff"/><path d="M32.5 12.9 L32.5 16.9" stroke="#c8354a" stroke-width="1.35" stroke-linecap="round"/><circle cx="32.5" cy="18.6" r="0.7" fill="#c8354a"/></g><g transform="translate(944.2,330.3)"><polygon points="32.5,0 65,18.75 65,56.25 32.5,75 0,56.25 0,18.75" fill="#f01a3b"/><polygon points="32.5,0 65,18.75 65,24.4 0,24.4 0,18.75" fill="#c2152e"/><circle cx="32.5" cy="15.5" r="4.7" fill="#fff"/><path d="M32.5 12.9 L32.5 16.9" stroke="#c8354a" stroke-width="1.35" stroke-linecap="round"/><circle cx="32.5" cy="18.6" r="0.7" fill="#c8354a"/></g><g transform="translate(332.0,394.0)"><polygon points="32.5,0 65,18.75 65,56.25 32.5,75 0,56.25 0,18.75" fill="#f01a3b"/><polygon points="32.5,0 65,18.75 65,24.4 0,24.4 0,18.75" fill="#c2152e"/><path d="M23 32.3 C25 31 27.5 29.5 29.2 29 L31 30.7 L31.9 34.3 C33 34.6 34.2 34.8 35.4 35.2 C38 36 40 36.8 41.6 37.8 C43.5 39 45.5 40.3 46.9 41.6 C45.5 41.8 44 42 42.5 42.2 C40.5 42.6 38.3 43.3 36.3 44 C36.2 45.2 36 46.3 35.9 47.5 C35.5 50 35 53 34.5 55.5 C34 57 33.4 58.5 32.8 60 C29.5 59.5 26.5 58.8 23.5 57.7 C21.5 56.5 19.8 55.2 18.6 53.7 C19.2 51.8 20.2 50 21.3 48.4 C23 46.6 25 45 26.6 43.1 C27.3 41.5 27.6 39.6 27.5 37.8 C27 36.9 26.3 36 25.7 35.2 C24.8 34.3 23.9 33.3 23 32.3Z" fill="rgba(255,255,255,0.18)" stroke="#fff" stroke-width="1.1" stroke-linejoin="round"/><path d="M29.2 29 L27.5 37.8 L35.4 35.2 L31.9 34.3 L25.7 35.2 M27.5 37.8 L36.3 44 L41.6 37.8 L31.5 40 L26.6 43.1 L35.9 47.5 L21.3 48.4 L28 52 L34.5 55.5 L23.5 57.7 L28 52 L35.9 47.5 M18.6 53.7 L28 52 L32.8 60 M21.3 48.4 L23.5 57.7 M31.5 40 L36.3 44 M38 40 L42.5 42.2" fill="none" stroke="#fff" stroke-width="0.6"/><circle cx="32.5" cy="15.5" r="4.7" fill="#fff"/><path d="M32.5 12.9 L32.5 16.9" stroke="#c8354a" stroke-width="1.35" stroke-linecap="round"/><circle cx="32.5" cy="18.6" r="0.7" fill="#c8354a"/></g><g transform="translate(404.0,394.0)"><polygon points="32.5,0 65,18.75 65,56.25 32.5,75 0,56.25 0,18.75" fill="#f01a3b"/><polygon points="32.5,0 65,18.75 65,24.4 0,24.4 0,18.75" fill="#c2152e"/><rect x="21.8" y="38.4" width="21.4" height="13.6" rx="6.8" fill="none" stroke="#fff" stroke-width="2.8"/><circle cx="32.5" cy="15.5" r="4.7" fill="#fff"/><path d="M32.5 12.9 L32.5 16.9" stroke="#c8354a" stroke-width="1.35" stroke-linecap="round"/><circle cx="32.5" cy="18.6" r="0.7" fill="#c8354a"/></g><g transform="translate(476.0,394.0)"><polygon points="32.5,0 65,18.75 65,56.25 32.5,75 0,56.25 0,18.75" fill="#38a37e"/><polygon points="32.5,0 65,18.75 65,24.4 0,24.4 0,18.75" fill="#2c8264"/><path d="M17.6 30.6 C20.5 29.8 24.2 31 27.3 32.6 C31 34.6 34.6 38.6 36.8 43.5 C38.2 46.8 39.4 49 42.2 50.5 L46.4 52.6 L41.2 54.2 L47.9 59.7" fill="none" stroke="#fff" stroke-width="1.15" stroke-linejoin="round" stroke-linecap="round"/><path d="M17.6 30.6 C18.6 34 20.5 38 22.2 41.6 C20.8 44.5 21.2 48 23 50.2 L25.4 46.6 L30.9 53.8" fill="none" stroke="#fff" stroke-width="1.15" stroke-linejoin="round" stroke-linecap="round"/><circle cx="24.3" cy="35.7" r="0.65" fill="#fff"/></g><g transform="translate(548.0,394.0)"><polygon points="32.5,0 65,18.75 65,56.25 32.5,75 0,56.25 0,18.75" fill="#38a37e"/><polygon points="32.5,0 65,18.75 65,24.4 0,24.4 0,18.75" fill="#2c8264"/><path d="M17.6 30.6 C20.5 29.8 24.2 31 27.3 32.6 C31 34.6 34.6 38.6 36.8 43.5 C38.2 46.8 39.4 49 42.2 50.5 L46.4 52.6 L41.2 54.2 L47.9 59.7" fill="none" stroke="#fff" stroke-width="1.15" stroke-linejoin="round" stroke-linecap="round"/><path d="M17.6 30.6 C18.6 34 20.5 38 22.2 41.6 C20.8 44.5 21.2 48 23 50.2 L25.4 46.6 L30.9 53.8" fill="none" stroke="#fff" stroke-width="1.15" stroke-linejoin="round" stroke-linecap="round"/><circle cx="24.3" cy="35.7" r="0.65" fill="#fff"/></g><g transform="translate(620.0,394.0)"><polygon points="32.5,0 65,18.75 65,56.25 32.5,75 0,56.25 0,18.75" fill="#38a37e"/><polygon points="32.5,0 65,18.75 65,24.4 0,24.4 0,18.75" fill="#2c8264"/><path d="M17.6 30.6 C20.5 29.8 24.2 31 27.3 32.6 C31 34.6 34.6 38.6 36.8 43.5 C38.2 46.8 39.4 49 42.2 50.5 L46.4 52.6 L41.2 54.2 L47.9 59.7" fill="none" stroke="#fff" stroke-width="1.15" stroke-linejoin="round" stroke-linecap="round"/><path d="M17.6 30.6 C18.6 34 20.5 38 22.2 41.6 C20.8 44.5 21.2 48 23 50.2 L25.4 46.6 L30.9 53.8" fill="none" stroke="#fff" stroke-width="1.15" stroke-linejoin="round" stroke-linecap="round"/><circle cx="24.3" cy="35.7" r="0.65" fill="#fff"/></g><g transform="translate(692.0,394.0)"><polygon points="32.5,0 65,18.75 65,56.25 32.5,75 0,56.25 0,18.75" fill="#38a37e"/><polygon points="32.5,0 65,18.75 65,24.4 0,24.4 0,18.75" fill="#2c8264"/><path d="M17.6 30.6 C20.5 29.8 24.2 31 27.3 32.6 C31 34.6 34.6 38.6 36.8 43.5 C38.2 46.8 39.4 49 42.2 50.5 L46.4 52.6 L41.2 54.2 L47.9 59.7" fill="none" stroke="#fff" stroke-width="1.15" stroke-linejoin="round" stroke-linecap="round"/><path d="M17.6 30.6 C18.6 34 20.5 38 22.2 41.6 C20.8 44.5 21.2 48 23 50.2 L25.4 46.6 L30.9 53.8" fill="none" stroke="#fff" stroke-width="1.15" stroke-linejoin="round" stroke-linecap="round"/><circle cx="24.3" cy="35.7" r="0.65" fill="#fff"/></g><g transform="translate(764.0,394.0)"><polygon points="32.5,0 65,18.75 65,56.25 32.5,75 0,56.25 0,18.75" fill="#38a37e"/><polygon points="32.5,0 65,18.75 65,24.4 0,24.4 0,18.75" fill="#2c8264"/><path d="M17.6 30.6 C20.5 29.8 24.2 31 27.3 32.6 C31 34.6 34.6 38.6 36.8 43.5 C38.2 46.8 39.4 49 42.2 50.5 L46.4 52.6 L41.2 54.2 L47.9 59.7" fill="none" stroke="#fff" stroke-width="1.15" stroke-linejoin="round" stroke-linecap="round"/><path d="M17.6 30.6 C18.6 34 20.5 38 22.2 41.6 C20.8 44.5 21.2 48 23 50.2 L25.4 46.6 L30.9 53.8" fill="none" stroke="#fff" stroke-width="1.15" stroke-linejoin="round" stroke-linecap="round"/><circle cx="24.3" cy="35.7" r="0.65" fill="#fff"/></g><g transform="translate(836.0,394.0)"><polygon points="32.5,0 65,18.75 65,56.25 32.5,75 0,56.25 0,18.75" fill="#38a37e"/><polygon points="32.5,0 65,18.75 65,24.4 0,24.4 0,18.75" fill="#2c8264"/><path d="M17.6 30.6 C20.5 29.8 24.2 31 27.3 32.6 C31 34.6 34.6 38.6 36.8 43.5 C38.2 46.8 39.4 49 42.2 50.5 L46.4 52.6 L41.2 54.2 L47.9 59.7" fill="none" stroke="#fff" stroke-width="1.15" stroke-linejoin="round" stroke-linecap="round"/><path d="M17.6 30.6 C18.6 34 20.5 38 22.2 41.6 C20.8 44.5 21.2 48 23 50.2 L25.4 46.6 L30.9 53.8" fill="none" stroke="#fff" stroke-width="1.15" stroke-linejoin="round" stroke-linecap="round"/><circle cx="24.3" cy="35.7" r="0.65" fill="#fff"/></g><g transform="translate(908.0,394.0)"><polygon points="32.5,0 65,18.75 65,56.25 32.5,75 0,56.25 0,18.75" fill="#f01a3b"/><polygon points="32.5,0 65,18.75 65,24.4 0,24.4 0,18.75" fill="#c2152e"/><rect x="14.1" y="26.4" width="4.1" height="36.9" fill="#fff"/><rect x="22.4" y="26.4" width="4.1" height="36.9" fill="#fff"/><rect x="30.7" y="26.4" width="4.1" height="36.9" fill="#fff"/><rect x="39.0" y="26.4" width="4.1" height="36.9" fill="#fff"/><rect x="47" y="41.2" width="4.1" height="7.1" fill="#fff"/><circle cx="32.5" cy="15.5" r="4.7" fill="#fff"/><path d="M32.5 12.9 L32.5 16.9" stroke="#c8354a" stroke-width="1.35" stroke-linecap="round"/><circle cx="32.5" cy="18.6" r="0.7" fill="#c8354a"/></g></svg>
<div class="t b" style="left:297px;top:509px;height:20px;line-height:20px;font-size:13px;color:#2b2f36">Instance List</div>
<div class="abs" style="left:295px;top:537px;width:700px;height:28px;border:1px solid #d0d3d8;border-radius:2px;background:#fff"></div>
<div class="abs" style="left:395px;top:537px;width:1px;height:28px;background:#d0d3d8"></div>
<div class="t" style="left:302px;top:541px;height:21px;line-height:21px;font-size:13px;color:#2b2f36">OR</div>
<svg class="abs" style="left:379px;top:548px" width="8" height="5"><path d="M0 0 L7 0 L3.5 4Z" fill="#5f6670"/></svg>
<svg class="abs" style="left:403px;top:545px" width="16" height="12"><path d="M0 1 H16 M3 5.5 H13 M6 10 H10" stroke="#5f6670" stroke-width="1.6"/></svg>
<svg class="abs" style="left:434px;top:543px" width="14" height="14"><path d="M8.5 1.2 L12.8 5.5 L11.2 6.2 L8.6 8.8 L8.9 11 L7.7 12.1 L1.9 6.3 L3 5.1 L5.2 5.4 L7.8 2.8Z M4.5 9.5 L1 13" fill="none" stroke="#5f6670" stroke-width="1.2" stroke-linejoin="round"/></svg>
<div class="abs" style="left:295px;top:573px;width:680px;height:41px;background:#eceff2;border:1px solid #d0d3d8;border-width:1px 0 1px 1px"></div>
<div class="t b" style="left:295px;width:242px;text-align:center;top:585px;height:20px;line-height:20px;font-size:13px;color:#2b2f36">Instance Name</div>
<div class="t b" style="left:537px;width:150px;text-align:center;top:585px;height:20px;line-height:20px;font-size:13px;color:#2b2f36">Alias</div>
<div class="t b" style="left:687px;width:120px;text-align:center;top:585px;height:20px;line-height:20px;font-size:13px;color:#2b2f36">Cluster:Role</div>
<div class="t b" style="left:807px;width:120px;text-align:center;top:585px;height:20px;line-height:20px;font-size:13px;color:#2b2f36">Host IP</div>
<div class="t b" style="left:927px;width:83px;text-align:center;top:585px;height:20px;line-height:20px;font-size:13px;color:#2b2f36"></div>
<div class="abs" style="left:537px;top:573px;width:1px;height:432px;background:#d0d3d8"></div>
<div class="abs" style="left:687px;top:573px;width:1px;height:432px;background:#d0d3d8"></div>
<div class="abs" style="left:807px;top:573px;width:1px;height:432px;background:#d0d3d8"></div>
<div class="abs" style="left:927px;top:573px;width:1px;height:432px;background:#d0d3d8"></div>
<div class="abs" style="left:295px;top:573px;width:1px;height:432px;background:#d0d3d8"></div>
<div class="abs" style="left:295px;top:645px;width:680px;height:1px;background:#d5d8dc"></div>
<svg class="abs" style="left:329px;top:621px" width="15" height="15" viewBox="0 0 15 15"><path d="M7.5 1.2 L9.3 5.3 L13.8 5.7 L10.4 8.7 L11.4 13.1 L7.5 10.8 L3.6 13.1 L4.6 8.7 L1.2 5.7 L5.7 5.3Z" fill="none" stroke="#4b5058" stroke-width="1.3" stroke-linejoin="round"/></svg>
<div class="t" style="left:351px;top:619px;height:20px;line-height:20px;font-size:13px;color:#4f73e3">233PostgreSQL17</div>
<svg class="abs" style="left:460px;top:619px" width="21" height="21" viewBox="0 0 21 21"><path d="M0.8 3 C0.8 1 2.5 0.5 4.5 0.5 L15 0.5 C17.5 0.5 19.2 1.2 19.2 3.5 C19.2 6.5 18.5 9 17.5 11.5 L19.5 13.2 L17 14.5 L15 14 L15 18 C15 19.2 14.2 19.7 13 19.7 L10.5 19.7 C9.3 19.7 8.8 18.8 8.8 18 L8.8 14 L6.5 14.6 C4 14.6 2.5 14 2 12 C1.2 9 0.8 6 0.8 3Z" fill="#34659a" stroke="#2d3440" stroke-width="1"/><path d="M6.3 13 C5.6 9 5.8 4.5 6.8 1.8 M6.6 6.5 C7.6 5.2 9.6 5.2 9.8 7.2 L9.8 12 C9.8 13 9 13.5 8.2 13.6 M14.3 1.6 C16.5 2.6 17 5 16 7 C15 8.3 13.4 8 13.6 6.4 M17.5 11.5 L16 12.8" fill="none" stroke="#e8eef5" stroke-width="0.85"/><circle cx="7.6" cy="12.6" r="0.7" fill="#222"/></svg>
<div class="t" style="left:546px;top:619px;height:20px;line-height:20px;font-size:13px;color:#2b2f36">233PostgreSQL17</div>
<div class="t" style="left:687px;width:120px;text-align:center;top:619px;height:20px;line-height:20px;font-size:13px;color:#2b2f36">empty</div>
<div class="t" style="left:807px;width:120px;text-align:center;top:619px;height:20px;line-height:20px;font-size:13px;color:#2b2f36">10.10.47.233</div>
<div class="t" style="left:936px;top:619px;height:20px;line-height:20px;font-size:13px;color:#2b2f36">Postg</div>
<div class="abs" style="left:295px;top:678px;width:680px;height:1px;background:#d5d8dc"></div>
<svg class="abs" style="left:329px;top:654px" width="15" height="15" viewBox="0 0 15 15"><path d="M7.5 1.2 L9.3 5.3 L13.8 5.7 L10.4 8.7 L11.4 13.1 L7.5 10.8 L3.6 13.1 L4.6 8.7 L1.2 5.7 L5.7 5.3Z" fill="none" stroke="#4b5058" stroke-width="1.3" stroke-linejoin="round"/></svg>
<div class="t" style="left:351px;top:652px;height:20px;line-height:20px;font-size:13px;color:#4f73e3">65 pg 14.2 standby</div>
<svg class="abs" style="left:465px;top:652px" width="21" height="21" viewBox="0 0 21 21"><path d="M0.8 3 C0.8 1 2.5 0.5 4.5 0.5 L15 0.5 C17.5 0.5 19.2 1.2 19.2 3.5 C19.2 6.5 18.5 9 17.5 11.5 L19.5 13.2 L17 14.5 L15 14 L15 18 C15 19.2 14.2 19.7 13 19.7 L10.5 19.7 C9.3 19.7 8.8 18.8 8.8 18 L8.8 14 L6.5 14.6 C4 14.6 2.5 14 2 12 C1.2 9 0.8 6 0.8 3Z" fill="#34659a" stroke="#2d3440" stroke-width="1"/><path d="M6.3 13 C5.6 9 5.8 4.5 6.8 1.8 M6.6 6.5 C7.6 5.2 9.6 5.2 9.8 7.2 L9.8 12 C9.8 13 9 13.5 8.2 13.6 M14.3 1.6 C16.5 2.6 17 5 16 7 C15 8.3 13.4 8 13.6 6.4 M17.5 11.5 L16 12.8" fill="none" stroke="#e8eef5" stroke-width="0.85"/><circle cx="7.6" cy="12.6" r="0.7" fill="#222"/></svg>
<svg class="abs" style="left:488px;top:654px" width="14" height="18" viewBox="0 0 14 18"><rect x="0.7" y="0.7" width="12.6" height="16.6" rx="3" fill="#fff" stroke="#2b2f36" stroke-width="1.3"/><path d="M2.3 4.2 Q7 5.8 11.7 4.2 L11.7 15.6 L2.3 15.6Z" fill="#5d626c"/><text x="7" y="13.6" font-size="8.5" font-weight="bold" text-anchor="middle" font-family="Liberation Sans" fill="#fff">S</text></svg>
<div class="t" style="left:546px;top:652px;height:20px;line-height:20px;font-size:13px;color:#2b2f36">65 pg 14.2 standby al...</div>
<div class="t" style="left:687px;width:120px;text-align:center;top:652px;height:20px;line-height:20px;font-size:13px;color:#2b2f36">empty</div>
<div class="t" style="left:807px;width:120px;text-align:center;top:652px;height:20px;line-height:20px;font-size:13px;color:#2b2f36">10.10.48.65</div>
<div class="t" style="left:936px;top:652px;height:20px;line-height:20px;font-size:13px;color:#2b2f36">Postg</div>
<div class="abs" style="left:295px;top:711px;width:680px;height:1px;background:#d5d8dc"></div>
<svg class="abs" style="left:329px;top:687px" width="15" height="15" viewBox="0 0 15 15"><path d="M7.5 1.2 L9.3 5.3 L13.8 5.7 L10.4 8.7 L11.4 13.1 L7.5 10.8 L3.6 13.1 L4.6 8.7 L1.2 5.7 L5.7 5.3Z" fill="none" stroke="#4b5058" stroke-width="1.3" stroke-linejoin="round"/></svg>
<div class="t" style="left:351px;top:685px;height:20px;line-height:20px;font-size:13px;color:#4f73e3">70 pg 14.7 single</div>
<svg class="abs" style="left:454px;top:685px" width="21" height="21" viewBox="0 0 21 21"><path d="M0.8 3 C0.8 1 2.5 0.5 4.5 0.5 L15 0.5 C17.5 0.5 19.2 1.2 19.2 3.5 C19.2 6.5 18.5 9 17.5 11.5 L19.5 13.2 L17 14.5 L15 14 L15 18 C15 19.2 14.2 19.7 13 19.7 L10.5 19.7 C9.3 19.7 8.8 18.8 8.8 18 L8.8 14 L6.5 14.6 C4 14.6 2.5 14 2 12 C1.2 9 0.8 6 0.8 3Z" fill="#34659a" stroke="#2d3440" stroke-width="1"/><path d="M6.3 13 C5.6 9 5.8 4.5 6.8 1.8 M6.6 6.5 C7.6 5.2 9.6 5.2 9.8 7.2 L9.8 12 C9.8 13 9 13.5 8.2 13.6 M14.3 1.6 C16.5 2.6 17 5 16 7 C15 8.3 13.4 8 13.6 6.4 M17.5 11.5 L16 12.8" fill="none" stroke="#e8eef5" stroke-width="0.85"/><circle cx="7.6" cy="12.6" r="0.7" fill="#222"/></svg>
<div class="t" style="left:687px;width:120px;text-align:center;top:685px;height:20px;line-height:20px;font-size:13px;color:#2b2f36">empty</div>
<div class="t" style="left:807px;width:120px;text-align:center;top:685px;height:20px;line-height:20px;font-size:13px;color:#2b2f36">10.10.48.70</div>
<div class="t" style="left:936px;top:685px;height:20px;line-height:20px;font-size:13px;color:#2b2f36">Postg</div>
<div class="abs" style="left:295px;top:744px;width:680px;height:1px;background:#d5d8dc"></div>
<svg class="abs" style="left:329px;top:720px" width="15" height="15" viewBox="0 0 15 15"><path d="M7.5 1.2 L9.3 5.3 L13.8 5.7 L10.4 8.7 L11.4 13.1 L7.5 10.8 L3.6 13.1 L4.6 8.7 L1.2 5.7 L5.7 5.3Z" fill="none" stroke="#4b5058" stroke-width="1.3" stroke-linejoin="round"/></svg>
<div class="t" style="left:351px;top:718px;height:20px;line-height:20px;font-size:13px;color:#4f73e3">pg_142</div>
<svg class="abs" style="left:397px;top:718px" width="21" height="21" viewBox="0 0 21 21"><path d="M0.8 3 C0.8 1 2.5 0.5 4.5 0.5 L15 0.5 C17.5 0.5 19.2 1.2 19.2 3.5 C19.2 6.5 18.5 9 17.5 11.5 L19.5 13.2 L17 14.5 L15 14 L15 18 C15 19.2 14.2 19.7 13 19.7 L10.5 19.7 C9.3 19.7 8.8 18.8 8.8 18 L8.8 14 L6.5 14.6 C4 14.6 2.5 14 2 12 C1.2 9 0.8 6 0.8 3Z" fill="#34659a" stroke="#2d3440" stroke-width="1"/><path d="M6.3 13 C5.6 9 5.8 4.5 6.8 1.8 M6.6 6.5 C7.6 5.2 9.6 5.2 9.8 7.2 L9.8 12 C9.8 13 9 13.5 8.2 13.6 M14.3 1.6 C16.5 2.6 17 5 16 7 C15 8.3 13.4 8 13.6 6.4 M17.5 11.5 L16 12.8" fill="none" stroke="#e8eef5" stroke-width="0.85"/><circle cx="7.6" cy="12.6" r="0.7" fill="#222"/></svg>
<div class="t" style="left:687px;width:120px;text-align:center;top:718px;height:20px;line-height:20px;font-size:13px;color:#2b2f36">empty</div>
<div class="t" style="left:807px;width:120px;text-align:center;top:718px;height:20px;line-height:20px;font-size:13px;color:#2b2f36">10.10.43.142</div>
<div class="t" style="left:936px;top:718px;height:20px;line-height:20px;font-size:13px;color:#2b2f36">Postg</div>
<div class="abs" style="left:295px;top:777px;width:680px;height:1px;background:#d5d8dc"></div>
<svg class="abs" style="left:329px;top:753px" width="15" height="15" viewBox="0 0 15 15"><path d="M7.5 1.2 L9.3 5.3 L13.8 5.7 L10.4 8.7 L11.4 13.1 L7.5 10.8 L3.6 13.1 L4.6 8.7 L1.2 5.7 L5.7 5.3Z" fill="none" stroke="#4b5058" stroke-width="1.3" stroke-linejoin="round"/></svg>
<div class="t" style="left:351px;top:751px;height:20px;line-height:20px;font-size:13px;color:#4f73e3">postgresl.17</div>
<svg class="abs" style="left:427px;top:751px" width="21" height="21" viewBox="0 0 21 21"><path d="M0.8 3 C0.8 1 2.5 0.5 4.5 0.5 L15 0.5 C17.5 0.5 19.2 1.2 19.2 3.5 C19.2 6.5 18.5 9 17.5 11.5 L19.5 13.2 L17 14.5 L15 14 L15 18 C15 19.2 14.2 19.7 13 19.7 L10.5 19.7 C9.3 19.7 8.8 18.8 8.8 18 L8.8 14 L6.5 14.6 C4 14.6 2.5 14 2 12 C1.2 9 0.8 6 0.8 3Z" fill="#34659a" stroke="#2d3440" stroke-width="1"/><path d="M6.3 13 C5.6 9 5.8 4.5 6.8 1.8 M6.6 6.5 C7.6 5.2 9.6 5.2 9.8 7.2 L9.8 12 C9.8 13 9 13.5 8.2 13.6 M14.3 1.6 C16.5 2.6 17 5 16 7 C15 8.3 13.4 8 13.6 6.4 M17.5 11.5 L16 12.8" fill="none" stroke="#e8eef5" stroke-width="0.85"/><circle cx="7.6" cy="12.6" r="0.7" fill="#222"/></svg>
<div class="t" style="left:546px;top:751px;height:20px;line-height:20px;font-size:13px;color:#2b2f36">235_pg</div>
<div class="t" style="left:687px;width:120px;text-align:center;top:751px;height:20px;line-height:20px;font-size:13px;color:#2b2f36">empty</div>
<div class="t" style="left:807px;width:120px;text-align:center;top:751px;height:20px;line-height:20px;font-size:13px;color:#2b2f36">10.10.49.235</div>
<div class="t" style="left:936px;top:751px;height:20px;line-height:20px;font-size:13px;color:#2b2f36">Postg</div>
<div class="abs" style="left:295px;top:810px;width:680px;height:1px;background:#d5d8dc"></div>
<svg class="abs" style="left:329px;top:786px" width="15" height="15" viewBox="0 0 15 15"><path d="M7.5 1.2 L9.3 5.3 L13.8 5.7 L10.4 8.7 L11.4 13.1 L7.5 10.8 L3.6 13.1 L4.6 8.7 L1.2 5.7 L5.7 5.3Z" fill="none" stroke="#4b5058" stroke-width="1.3" stroke-linejoin="round"/></svg>
<div class="t" style="left:351px;top:784px;height:20px;line-height:20px;font-size:12.5px;color:#4f73e3">rds_postgres_15_enhanc...</div>
<svg class="abs" style="left:509px;top:784px" width="21" height="21" viewBox="0 0 21 21"><path d="M0.8 3 C0.8 1 2.5 0.5 4.5 0.5 L15 0.5 C17.5 0.5 19.2 1.2 19.2 3.5 C19.2 6.5 18.5 9 17.5 11.5 L19.5 13.2 L17 14.5 L15 14 L15 18 C15 19.2 14.2 19.7 13 19.7 L10.5 19.7 C9.3 19.7 8.8 18.8 8.8 18 L8.8 14 L6.5 14.6 C4 14.6 2.5 14 2 12 C1.2 9 0.8 6 0.8 3Z" fill="#34659a" stroke="#2d3440" stroke-width="1"/><path d="M6.3 13 C5.6 9 5.8 4.5 6.8 1.8 M6.6 6.5 C7.6 5.2 9.6 5.2 9.8 7.2 L9.8 12 C9.8 13 9 13.5 8.2 13.6 M14.3 1.6 C16.5 2.6 17 5 16 7 C15 8.3 13.4 8 13.6 6.4 M17.5 11.5 L16 12.8" fill="none" stroke="#e8eef5" stroke-width="0.85"/><circle cx="7.6" cy="12.6" r="0.7" fill="#222"/></svg>
<div class="t" style="left:687px;width:120px;text-align:center;top:784px;height:20px;line-height:20px;font-size:13px;color:#2b2f36">empty</div>
<div class="t" style="left:807px;width:120px;text-align:center;top:784px;height:20px;line-height:20px;font-size:13px;color:#2b2f36">postgres15-2.c...</div>
<div class="t" style="left:936px;top:784px;height:20px;line-height:20px;font-size:13px;color:#2b2f36">postg</div>
<div class="abs" style="left:295px;top:843px;width:680px;height:1px;background:#d5d8dc"></div>
<svg class="abs" style="left:306px;top:822px" width="13" height="9"><path d="M0.5 0.5 L12 0.5 L6.25 8Z" fill="#4b5058"/></svg>
<div class="t" style="left:325px;top:817px;height:20px;line-height:20px;font-size:13px;color:#2b2f36">singlestore</div>
<div class="abs" style="left:296px;top:845px;width:680px;height:32px;background:#dde8fb"></div>
<div class="abs" style="left:537px;top:844px;width:1px;height:33px;background:#d0d3d8"></div>
<div class="abs" style="left:687px;top:844px;width:1px;height:33px;background:#d0d3d8"></div>
<div class="abs" style="left:807px;top:844px;width:1px;height:33px;background:#d0d3d8"></div>
<div class="abs" style="left:927px;top:844px;width:1px;height:33px;background:#d0d3d8"></div>
<div class="abs" style="left:295px;top:876px;width:680px;height:1px;background:#d5d8dc"></div>
<svg class="abs" style="left:331px;top:855px" width="13" height="9"><path d="M0.5 0.5 L12 0.5 L6.25 8Z" fill="#4b5058"/></svg>
<svg class="abs" style="left:354px;top:852px" width="15" height="15" viewBox="0 0 15 15"><path d="M7.5 1.2 L9.3 5.3 L13.8 5.7 L10.4 8.7 L11.4 13.1 L7.5 10.8 L3.6 13.1 L4.6 8.7 L1.2 5.7 L5.7 5.3Z" fill="none" stroke="#4b5058" stroke-width="1.3" stroke-linejoin="round"/></svg>
<div class="t" style="left:376px;top:850px;height:20px;line-height:20px;font-size:13px;color:#4f73e3">241 1903test</div>
<svg class="abs" style="left:458px;top:852px" width="17" height="17"><path d="M12.30 8.32L12.30 8.08L16.31 8.50L16.21 9.50ZM12.16 9.27L12.21 9.04L16.01 10.41L15.67 11.35ZM11.79 10.17L11.90 9.95L15.25 12.19L14.70 13.02ZM11.21 10.94L11.37 10.76L14.10 13.74L13.36 14.42ZM10.47 11.56L10.67 11.42L12.60 14.96L11.73 15.45ZM9.61 11.98L9.83 11.90L10.86 15.80L9.89 16.06ZM8.66 12.19L8.90 12.16L8.97 16.19L7.97 16.21ZM7.70 12.16L7.94 12.19L7.04 16.12L6.06 15.90ZM6.77 11.90L6.99 11.98L5.18 15.58L4.28 15.14ZM5.93 11.42L6.13 11.56L3.50 14.62L2.74 13.97ZM5.23 10.76L5.39 10.94L2.10 13.29L1.52 12.48ZM4.70 9.95L4.81 10.17L1.07 11.66L0.69 10.73ZM4.39 9.04L4.44 9.27L0.45 9.82L0.31 8.83ZM4.30 8.08L4.30 8.32L0.29 7.90L0.39 6.90ZM4.44 7.13L4.39 7.36L0.59 5.99L0.93 5.05ZM4.81 6.23L4.70 6.45L1.35 4.21L1.90 3.38ZM5.39 5.46L5.23 5.64L2.50 2.66L3.24 1.98ZM6.13 4.84L5.93 4.98L4.00 1.44L4.87 0.95ZM6.99 4.42L6.77 4.50L5.74 0.60L6.71 0.34ZM7.94 4.21L7.70 4.24L7.63 0.21L8.63 0.19ZM8.90 4.24L8.66 4.21L9.56 0.28L10.54 0.50ZM9.83 4.50L9.61 4.42L11.42 0.82L12.32 1.26ZM10.67 4.98L10.47 4.84L13.10 1.78L13.86 2.43ZM11.37 5.64L11.21 5.46L14.50 3.11L15.08 3.92ZM11.90 6.45L11.79 6.23L15.53 4.74L15.91 5.67ZM12.21 7.36L12.16 7.13L16.15 6.58L16.29 7.57Z" fill="#2b2f36"/></svg>
<div class="t" style="left:546px;top:850px;height:20px;line-height:20px;font-size:13px;color:#2b2f36">241 1903test alias</div>
<div class="abs" style="left:295px;top:909px;width:680px;height:1px;background:#d5d8dc"></div>
<svg class="abs" style="left:354px;top:885px" width="15" height="15" viewBox="0 0 15 15"><path d="M7.5 1.2 L9.3 5.3 L13.8 5.7 L10.4 8.7 L11.4 13.1 L7.5 10.8 L3.6 13.1 L4.6 8.7 L1.2 5.7 L5.7 5.3Z" fill="none" stroke="#4b5058" stroke-width="1.3" stroke-linejoin="round"/></svg>
<div class="t" style="left:376px;top:883px;height:20px;line-height:20px;font-size:12.6px;color:#4f73e3">241 1903test_Aggre...</div>
<svg class="abs" style="left:510px;top:885px" width="17" height="17"><path d="M12.30 8.32L12.30 8.08L16.31 8.50L16.21 9.50ZM12.16 9.27L12.21 9.04L16.01 10.41L15.67 11.35ZM11.79 10.17L11.90 9.95L15.25 12.19L14.70 13.02ZM11.21 10.94L11.37 10.76L14.10 13.74L13.36 14.42ZM10.47 11.56L10.67 11.42L12.60 14.96L11.73 15.45ZM9.61 11.98L9.83 11.90L10.86 15.80L9.89 16.06ZM8.66 12.19L8.90 12.16L8.97 16.19L7.97 16.21ZM7.70 12.16L7.94 12.19L7.04 16.12L6.06 15.90ZM6.77 11.90L6.99 11.98L5.18 15.58L4.28 15.14ZM5.93 11.42L6.13 11.56L3.50 14.62L2.74 13.97ZM5.23 10.76L5.39 10.94L2.10 13.29L1.52 12.48ZM4.70 9.95L4.81 10.17L1.07 11.66L0.69 10.73ZM4.39 9.04L4.44 9.27L0.45 9.82L0.31 8.83ZM4.30 8.08L4.30 8.32L0.29 7.90L0.39 6.90ZM4.44 7.13L4.39 7.36L0.59 5.99L0.93 5.05ZM4.81 6.23L4.70 6.45L1.35 4.21L1.90 3.38ZM5.39 5.46L5.23 5.64L2.50 2.66L3.24 1.98ZM6.13 4.84L5.93 4.98L4.00 1.44L4.87 0.95ZM6.99 4.42L6.77 4.50L5.74 0.60L6.71 0.34ZM7.94 4.21L7.70 4.24L7.63 0.21L8.63 0.19ZM8.90 4.24L8.66 4.21L9.56 0.28L10.54 0.50ZM9.83 4.50L9.61 4.42L11.42 0.82L12.32 1.26ZM10.67 4.98L10.47 4.84L13.10 1.78L13.86 2.43ZM11.37 5.64L11.21 5.46L14.50 3.11L15.08 3.92ZM11.90 6.45L11.79 6.23L15.53 4.74L15.91 5.67ZM12.21 7.36L12.16 7.13L16.15 6.58L16.29 7.57Z" fill="#2b2f36"/></svg>
<div class="t" style="left:546px;top:883px;height:20px;line-height:20px;font-size:13px;color:#2b2f36">alias 241 1904test_A...</div>
<div class="t" style="left:687px;width:120px;text-align:center;top:883px;height:20px;line-height:20px;font-size:13px;color:#2b2f36">empty</div>
<div class="t" style="left:807px;width:120px;text-align:center;top:883px;height:20px;line-height:20px;font-size:13px;color:#2b2f36">singlestore-ma</div>
<div class="t" style="left:936px;top:883px;height:20px;line-height:20px;font-size:13px;color:#2b2f36">Single</div>
<div class="abs" style="left:295px;top:942px;width:680px;height:1px;background:#d5d8dc"></div>
<svg class="abs" style="left:354px;top:918px" width="15" height="15" viewBox="0 0 15 15"><path d="M7.5 1.2 L9.3 5.3 L13.8 5.7 L10.4 8.7 L11.4 13.1 L7.5 10.8 L3.6 13.1 L4.6 8.7 L1.2 5.7 L5.7 5.3Z" fill="none" stroke="#4b5058" stroke-width="1.3" stroke-linejoin="round"/></svg>
<div class="t" style="left:376px;top:916px;height:20px;line-height:20px;font-size:12.6px;color:#4f73e3">241 1903test_Aggre...</div>
<svg class="abs" style="left:510px;top:918px" width="17" height="17"><path d="M12.30 8.32L12.30 8.08L16.31 8.50L16.21 9.50ZM12.16 9.27L12.21 9.04L16.01 10.41L15.67 11.35ZM11.79 10.17L11.90 9.95L15.25 12.19L14.70 13.02ZM11.21 10.94L11.37 10.76L14.10 13.74L13.36 14.42ZM10.47 11.56L10.67 11.42L12.60 14.96L11.73 15.45ZM9.61 11.98L9.83 11.90L10.86 15.80L9.89 16.06ZM8.66 12.19L8.90 12.16L8.97 16.19L7.97 16.21ZM7.70 12.16L7.94 12.19L7.04 16.12L6.06 15.90ZM6.77 11.90L6.99 11.98L5.18 15.58L4.28 15.14ZM5.93 11.42L6.13 11.56L3.50 14.62L2.74 13.97ZM5.23 10.76L5.39 10.94L2.10 13.29L1.52 12.48ZM4.70 9.95L4.81 10.17L1.07 11.66L0.69 10.73ZM4.39 9.04L4.44 9.27L0.45 9.82L0.31 8.83ZM4.30 8.08L4.30 8.32L0.29 7.90L0.39 6.90ZM4.44 7.13L4.39 7.36L0.59 5.99L0.93 5.05ZM4.81 6.23L4.70 6.45L1.35 4.21L1.90 3.38ZM5.39 5.46L5.23 5.64L2.50 2.66L3.24 1.98ZM6.13 4.84L5.93 4.98L4.00 1.44L4.87 0.95ZM6.99 4.42L6.77 4.50L5.74 0.60L6.71 0.34ZM7.94 4.21L7.70 4.24L7.63 0.21L8.63 0.19ZM8.90 4.24L8.66 4.21L9.56 0.28L10.54 0.50ZM9.83 4.50L9.61 4.42L11.42 0.82L12.32 1.26ZM10.67 4.98L10.47 4.84L13.10 1.78L13.86 2.43ZM11.37 5.64L11.21 5.46L14.50 3.11L15.08 3.92ZM11.90 6.45L11.79 6.23L15.53 4.74L15.91 5.67ZM12.21 7.36L12.16 7.13L16.15 6.58L16.29 7.57Z" fill="#2b2f36"/></svg>
<div class="t" style="left:546px;top:916px;height:20px;line-height:20px;font-size:13px;color:#2b2f36">alias 241 1904test_A...</div>
<div class="t" style="left:687px;width:120px;text-align:center;top:916px;height:20px;line-height:20px;font-size:13px;color:#2b2f36">empty</div>
<div class="t" style="left:807px;width:120px;text-align:center;top:916px;height:20px;line-height:20px;font-size:13px;color:#2b2f36">singlestore-ca</div>
<div class="t" style="left:936px;top:916px;height:20px;line-height:20px;font-size:13px;color:#2b2f36">Single</div>
<div class="abs" style="left:295px;top:975px;width:680px;height:1px;background:#d5d8dc"></div>
<svg class="abs" style="left:354px;top:951px" width="15" height="15" viewBox="0 0 15 15"><path d="M7.5 1.2 L9.3 5.3 L13.8 5.7 L10.4 8.7 L11.4 13.1 L7.5 10.8 L3.6 13.1 L4.6 8.7 L1.2 5.7 L5.7 5.3Z" fill="none" stroke="#4b5058" stroke-width="1.3" stroke-linejoin="round"/></svg>
<div class="t" style="left:376px;top:949px;height:20px;line-height:20px;font-size:12.6px;color:#4f73e3">241 1903test_LEAF-2</div>
<svg class="abs" style="left:504px;top:951px" width="17" height="17"><path d="M12.30 8.32L12.30 8.08L16.31 8.50L16.21 9.50ZM12.16 9.27L12.21 9.04L16.01 10.41L15.67 11.35ZM11.79 10.17L11.90 9.95L15.25 12.19L14.70 13.02ZM11.21 10.94L11.37 10.76L14.10 13.74L13.36 14.42ZM10.47 11.56L10.67 11.42L12.60 14.96L11.73 15.45ZM9.61 11.98L9.83 11.90L10.86 15.80L9.89 16.06ZM8.66 12.19L8.90 12.16L8.97 16.19L7.97 16.21ZM7.70 12.16L7.94 12.19L7.04 16.12L6.06 15.90ZM6.77 11.90L6.99 11.98L5.18 15.58L4.28 15.14ZM5.93 11.42L6.13 11.56L3.50 14.62L2.74 13.97ZM5.23 10.76L5.39 10.94L2.10 13.29L1.52 12.48ZM4.70 9.95L4.81 10.17L1.07 11.66L0.69 10.73ZM4.39 9.04L4.44 9.27L0.45 9.82L0.31 8.83ZM4.30 8.08L4.30 8.32L0.29 7.90L0.39 6.90ZM4.44 7.13L4.39 7.36L0.59 5.99L0.93 5.05ZM4.81 6.23L4.70 6.45L1.35 4.21L1.90 3.38ZM5.39 5.46L5.23 5.64L2.50 2.66L3.24 1.98ZM6.13 4.84L5.93 4.98L4.00 1.44L4.87 0.95ZM6.99 4.42L6.77 4.50L5.74 0.60L6.71 0.34ZM7.94 4.21L7.70 4.24L7.63 0.21L8.63 0.19ZM8.90 4.24L8.66 4.21L9.56 0.28L10.54 0.50ZM9.83 4.50L9.61 4.42L11.42 0.82L12.32 1.26ZM10.67 4.98L10.47 4.84L13.10 1.78L13.86 2.43ZM11.37 5.64L11.21 5.46L14.50 3.11L15.08 3.92ZM11.90 6.45L11.79 6.23L15.53 4.74L15.91 5.67ZM12.21 7.36L12.16 7.13L16.15 6.58L16.29 7.57Z" fill="#2b2f36"/></svg>
<div class="t" style="left:546px;top:949px;height:20px;line-height:20px;font-size:13px;color:#2b2f36">alias 241 1904test_L...</div>
<div class="t" style="left:687px;width:120px;text-align:center;top:949px;height:20px;line-height:20px;font-size:13px;color:#2b2f36">empty</div>
<div class="t" style="left:807px;width:120px;text-align:center;top:949px;height:20px;line-height:20px;font-size:13px;color:#2b2f36">singlestore-lf1</div>
<div class="t" style="left:936px;top:949px;height:20px;line-height:20px;font-size:13px;color:#2b2f36">Single</div>
<div class="abs" style="left:295px;top:1008px;width:680px;height:1px;background:#d5d8dc"></div>
<svg class="abs" style="left:354px;top:984px" width="15" height="15" viewBox="0 0 15 15"><path d="M7.5 1.2 L9.3 5.3 L13.8 5.7 L10.4 8.7 L11.4 13.1 L7.5 10.8 L3.6 13.1 L4.6 8.7 L1.2 5.7 L5.7 5.3Z" fill="none" stroke="#4b5058" stroke-width="1.3" stroke-linejoin="round"/></svg>
<div class="t" style="left:376px;top:982px;height:20px;line-height:20px;font-size:12.6px;color:#4f73e3">241 1903test_LEAF-3</div>
<svg class="abs" style="left:504px;top:984px" width="17" height="17"><path d="M12.30 8.32L12.30 8.08L16.31 8.50L16.21 9.50ZM12.16 9.27L12.21 9.04L16.01 10.41L15.67 11.35ZM11.79 10.17L11.90 9.95L15.25 12.19L14.70 13.02ZM11.21 10.94L11.37 10.76L14.10 13.74L13.36 14.42ZM10.47 11.56L10.67 11.42L12.60 14.96L11.73 15.45ZM9.61 11.98L9.83 11.90L10.86 15.80L9.89 16.06ZM8.66 12.19L8.90 12.16L8.97 16.19L7.97 16.21ZM7.70 12.16L7.94 12.19L7.04 16.12L6.06 15.90ZM6.77 11.90L6.99 11.98L5.18 15.58L4.28 15.14ZM5.93 11.42L6.13 11.56L3.50 14.62L2.74 13.97ZM5.23 10.76L5.39 10.94L2.10 13.29L1.52 12.48ZM4.70 9.95L4.81 10.17L1.07 11.66L0.69 10.73ZM4.39 9.04L4.44 9.27L0.45 9.82L0.31 8.83ZM4.30 8.08L4.30 8.32L0.29 7.90L0.39 6.90ZM4.44 7.13L4.39 7.36L0.59 5.99L0.93 5.05ZM4.81 6.23L4.70 6.45L1.35 4.21L1.90 3.38ZM5.39 5.46L5.23 5.64L2.50 2.66L3.24 1.98ZM6.13 4.84L5.93 4.98L4.00 1.44L4.87 0.95ZM6.99 4.42L6.77 4.50L5.74 0.60L6.71 0.34ZM7.94 4.21L7.70 4.24L7.63 0.21L8.63 0.19ZM8.90 4.24L8.66 4.21L9.56 0.28L10.54 0.50ZM9.83 4.50L9.61 4.42L11.42 0.82L12.32 1.26ZM10.67 4.98L10.47 4.84L13.10 1.78L13.86 2.43ZM11.37 5.64L11.21 5.46L14.50 3.11L15.08 3.92ZM11.90 6.45L11.79 6.23L15.53 4.74L15.91 5.67ZM12.21 7.36L12.16 7.13L16.15 6.58L16.29 7.57Z" fill="#2b2f36"/></svg>
<div class="t" style="left:546px;top:982px;height:20px;line-height:20px;font-size:13px;color:#2b2f36">alias 241 1904test_L...</div>
<div class="t" style="left:687px;width:120px;text-align:center;top:982px;height:20px;line-height:20px;font-size:13px;color:#2b2f36">empty</div>
<div class="t" style="left:807px;width:120px;text-align:center;top:982px;height:20px;line-height:20px;font-size:13px;color:#2b2f36">singlestore-lf2</div>
<div class="t" style="left:936px;top:982px;height:20px;line-height:20px;font-size:13px;color:#2b2f36">Single</div>
<div class="abs" style="left:295px;top:1002px;width:680px;height:6px;background:#d2d5d9"></div>
<div class="abs" style="left:285px;top:1008px;width:682px;height:10px;background:#fff"></div>
<div class="abs" style="left:900px;top:1px;width:67px;height:1017px;background:linear-gradient(to right,rgba(30,40,50,0),rgba(30,40,50,0.02) 50%,rgba(30,40,50,0.08))"></div>
<div class="abs" style="left:967px;top:1px;width:893px;height:1016px;background:#fff"></div>
<div class="t" style="left:979px;top:9px;height:22px;line-height:22px;font-size:16.3px;color:#2b2f36">Cluster: 241 1903test (241 1903test alias)</div>
<div class="abs" style="left:1713px;top:9px;width:114px;height:24px;background:#e3e6e9;border-radius:3px"></div>
<svg class="abs" style="left:1726px;top:14px" width="15" height="15"><circle cx="7.5" cy="7" r="6" fill="none" stroke="#5a5f67" stroke-width="1.1"/><path d="M7.3 3.8 V7.5 L9.5 9.3" fill="none" stroke="#5a5f67" stroke-width="1.1"/></svg>
<div class="t" style="left:1746px;top:11.5px;height:20px;line-height:20px;font-size:12.2px;color:#2b2f36">Slide History</div>
<svg class="abs" style="left:1838px;top:12px" width="16" height="15"><path d="M1.5 1.5 L14 13.5 M14 1.5 L1.5 13.5" stroke="#4b5058" stroke-width="1.4"/></svg>
<div class="abs" style="left:967px;top:44px;width:892px;height:1px;background:#c9cdd2"></div>
<div class="abs" style="left:967px;top:45px;width:892px;height:31px;background:#eceff2"></div>
<svg class="abs" style="left:971px;top:56px" width="8" height="11"><path d="M6 1 L1.8 5.5 L6 10" fill="none" stroke="#8d939b" stroke-width="1.2"/></svg>
<div class="abs" style="left:987px;top:45px;width:139px;height:31px;background:#fff;border-top:2px solid #4f7ff0"></div>
<div class="t b" style="left:1004px;top:51px;height:20px;line-height:20px;font-size:11.3px;color:#2b2f36">Cluster Information</div>
<div class="t b" style="left:1143px;top:51px;height:20px;line-height:20px;font-size:11.3px;color:#7c828a">Database Information</div>
<div class="t b" style="left:1294px;top:51px;height:20px;line-height:20px;font-size:11.3px;color:#7c828a">Partition Information</div>
<div class="t b" style="left:1441px;top:51px;height:20px;line-height:20px;font-size:11.3px;color:#7c828a">Metric</div>
<div class="t b" style="left:1510px;top:51px;height:20px;line-height:20px;font-size:11.3px;color:#7c828a">Active Query</div>
<div class="t b" style="left:1613px;top:51px;height:20px;line-height:20px;font-size:11.3px;color:#7c828a">SQL List</div>
<div class="t b" style="left:1692px;top:51px;height:20px;line-height:20px;font-size:11.3px;color:#7c828a">Event</div>
<div class="t b" style="left:1756px;top:51px;height:20px;line-height:20px;font-size:11.3px;color:#7c828a">Alert</div>
<div class="t b" style="left:1816px;top:51px;height:20px;line-height:20px;font-size:11.3px;color:#7c828a">Paran</div>
<div class="abs" style="left:1849px;top:45px;width:10px;height:31px;background:#eceff2"></div>
<svg class="abs" style="left:1855px;top:56px" width="6" height="11"><path d="M1 1 L5.5 5.5 L1 10" fill="none" stroke="#8d939b" stroke-width="1.1"/></svg>
<div class="abs" style="left:977px;top:92px;width:880px;height:246px;border:1px solid #d0d3d8;border-bottom:0"></div>
<div class="abs" style="left:977px;top:337px;width:880px;height:1px;background:#d0d3d8"></div>
<div class="abs" style="left:978px;top:93px;width:878px;height:32px;background:#eceff2;border-bottom:1px solid #d0d3d8"></div>
<div class="t b" style="left:990px;top:99px;height:20px;line-height:20px;font-size:11.5px;color:#2b2f36">Information</div>
<div class="t" style="left:994px;top:137px;height:20px;line-height:20px;font-size:12px;color:#2b2f36">Cluster Name</div>
<div class="t" style="left:1136px;top:137px;height:20px;line-height:20px;font-size:13px;color:#2b2f36">241 1903test alias</div>
<div class="t" style="left:994px;top:169px;height:20px;line-height:20px;font-size:12px;color:#2b2f36">Total License Capacity</div>
<div class="t" style="left:1136px;top:169px;height:20px;line-height:20px;font-size:13px;color:#2b2f36">2 units</div>
<div class="t" style="left:994px;top:201px;height:20px;line-height:20px;font-size:12px;color:#2b2f36">High Availability Mode</div>
<div class="t" style="left:1136px;top:201px;height:20px;line-height:20px;font-size:13px;color:#2b2f36">ON(paired)</div>
<div class="t" style="left:994px;top:233px;height:20px;line-height:20px;font-size:12px;color:#2b2f36">Aggregator Node Count</div>
<div class="t" style="left:1136px;top:233px;height:20px;line-height:20px;font-size:13px;color:#2b2f36">2</div>
<div class="t" style="left:994px;top:265px;height:20px;line-height:20px;font-size:12px;color:#2b2f36">Leaf Node Count</div>
<div class="t" style="left:1136px;top:265px;height:20px;line-height:20px;font-size:13px;color:#2b2f36">2</div>
<div class="t" style="left:994px;top:297px;height:20px;line-height:20px;font-size:12px;color:#2b2f36">Default Partition Per Leaf</div>
<div class="t" style="left:1136px;top:297px;height:20px;line-height:20px;font-size:13px;color:#2b2f36">3</div>
<div class="abs" style="left:1251px;top:137px;width:72px;height:20px;border:1px solid #c9ccd1;border-radius:2px;background:#fff"></div>
<div class="t" style="left:1260px;top:137px;height:20px;line-height:20px;font-size:12px;color:#4b5058">Cluster</div>
<svg class="abs" style="left:1305px;top:143.5px" width="6" height="8"><path d="M1 1 L4 3.8 L1 6.6" fill="none" stroke="#4b5058" stroke-width="1"/></svg>
<div class="abs" style="left:1331px;top:137px;width:64px;height:20px;border:1px solid #d3d6db;border-radius:2px;background:#eceff2"></div>
<div class="t" style="left:1340px;top:137px;height:20px;line-height:20px;font-size:12px;color:#9aa0a7">Detail</div>
<svg class="abs" style="left:1378px;top:143.5px" width="6" height="8"><path d="M1 1 L4 3.8 L1 6.6" fill="none" stroke="#4b5058" stroke-width="1"/></svg>
<svg class="abs" style="left:1404px;top:140px" width="14" height="14"><rect x="5.4" y="0" width="3.2" height="3.5" rx="0.6" transform="rotate(22.5 7 7)" fill="#5a5f67"/><rect x="5.4" y="0" width="3.2" height="3.5" rx="0.6" transform="rotate(67.5 7 7)" fill="#5a5f67"/><rect x="5.4" y="0" width="3.2" height="3.5" rx="0.6" transform="rotate(112.5 7 7)" fill="#5a5f67"/><rect x="5.4" y="0" width="3.2" height="3.5" rx="0.6" transform="rotate(157.5 7 7)" fill="#5a5f67"/><rect x="5.4" y="0" width="3.2" height="3.5" rx="0.6" transform="rotate(202.5 7 7)" fill="#5a5f67"/><rect x="5.4" y="0" width="3.2" height="3.5" rx="0.6" transform="rotate(247.5 7 7)" fill="#5a5f67"/><rect x="5.4" y="0" width="3.2" height="3.5" rx="0.6" transform="rotate(292.5 7 7)" fill="#5a5f67"/><rect x="5.4" y="0" width="3.2" height="3.5" rx="0.6" transform="rotate(337.5 7 7)" fill="#5a5f67"/><circle cx="7" cy="7" r="5" fill="#5a5f67"/><circle cx="7" cy="7" r="2.1" fill="#fff"/></svg>
<div class="t b" style="left:977px;top:350px;height:20px;line-height:20px;font-size:12.2px;color:#2b2f36">Cluster Configuration Information</div>
<div class="abs" style="left:1747px;top:348px;width:110px;height:24px;background:#eceff2;border-radius:3px"></div>
<div class="abs" style="left:1749px;top:350px;width:50px;height:20px;background:#fff;border-radius:2px"></div>
<svg class="abs" style="left:1758px;top:355px" width="11" height="10"><path d="M0 1 H1.6 M0 4.5 H1.6 M0 8 H1.6 M3.5 1 H10.5 M3.5 4.5 H10.5 M3.5 8 H10.5" stroke="#4f7ff0" stroke-width="1.2"/></svg>
<div class="t" style="left:1774px;top:350px;height:20px;line-height:20px;font-size:11.5px;color:#2b2f36">List</div>
<svg class="abs" style="left:1809px;top:354px" width="12" height="11"><rect x="0.5" y="0.5" width="3" height="3" fill="none" stroke="#5f6670" stroke-width="0.9"/><rect x="7.5" y="0.5" width="3" height="3" fill="none" stroke="#5f6670" stroke-width="0.9"/><rect x="7.5" y="6.5" width="3" height="3" fill="none" stroke="#5f6670" stroke-width="0.9"/><path d="M3.5 2 H7.5 M5.5 2 V8 H7.5" fill="none" stroke="#5f6670" stroke-width="0.9"/></svg>
<div class="t" style="left:1825px;top:350px;height:20px;line-height:20px;font-size:11.5px;color:#8d939b">Map</div>
<div class="abs" style="left:977px;top:380px;width:848px;height:28px;border:1px solid #d0d3d8;border-radius:2px;background:#fff"></div>
<div class="abs" style="left:1077px;top:380px;width:1px;height:28px;background:#d0d3d8"></div>
<div class="t" style="left:984px;top:384px;height:21px;line-height:21px;font-size:13px;color:#2b2f36">OR</div>
<svg class="abs" style="left:1061px;top:391px" width="8" height="5"><path d="M0 0 L7 0 L3.5 4Z" fill="#5f6670"/></svg>
<svg class="abs" style="left:1085px;top:388px" width="16" height="12"><path d="M0 1 H16 M3 5.5 H13 M6 10 H10" stroke="#5f6670" stroke-width="1.6"/></svg>
<svg class="abs" style="left:1116px;top:386px" width="14" height="14"><path d="M8.5 1.2 L12.8 5.5 L11.2 6.2 L8.6 8.8 L8.9 11 L7.7 12.1 L1.9 6.3 L3 5.1 L5.2 5.4 L7.8 2.8Z M4.5 9.5 L1 13" fill="none" stroke="#5f6670" stroke-width="1.2" stroke-linejoin="round"/></svg>
<svg class="abs" style="left:1836px;top:391px" width="18" height="5"><circle cx="2.5" cy="2.5" r="1.3" fill="#8d939b"/><circle cx="8.5" cy="2.5" r="1.3" fill="#8d939b"/><circle cx="14.5" cy="2.5" r="1.3" fill="#8d939b"/></svg>
<div class="abs" style="left:977px;top:414px;width:880px;height:500px;border:1px solid #d0d3d8;border-bottom:0"></div>
<div class="abs" style="left:978px;top:415px;width:878px;height:40px;background:#eceff2;border-bottom:1px solid #d0d3d8"></div>
<div class="t b" style="left:977px;width:120px;text-align:center;top:426px;height:20px;line-height:20px;font-size:13px;color:#2b2f36">Instance Name</div>
<div class="t b" style="left:1097px;width:120px;text-align:center;top:426px;height:20px;line-height:20px;font-size:13px;color:#2b2f36">Host</div>
<div class="t b" style="left:1217px;width:120px;text-align:center;top:426px;height:20px;line-height:20px;font-size:13px;color:#2b2f36">Port</div>
<div class="t b" style="left:1337px;width:120px;text-align:center;top:426px;height:20px;line-height:20px;font-size:13px;color:#2b2f36">Status</div>
<div class="t b" style="left:1457px;width:120px;text-align:center;top:426px;height:20px;line-height:20px;font-size:13px;color:#2b2f36">Role</div>
<div class="t b" style="left:1577px;width:120px;text-align:center;top:426px;height:20px;line-height:20px;font-size:13px;color:#2b2f36">Node ID</div>
<div class="t b" style="left:1697px;width:120px;text-align:center;top:426px;height:20px;line-height:20px;font-size:13px;color:#2b2f36">Pair Host</div>
<div class="t b" style="left:1826px;top:426px;height:20px;line-height:20px;font-size:13px;color:#2b2f36;width:31px;overflow:hidden">Availa</div>
<div class="abs" style="left:1097px;top:414px;width:1px;height:173px;background:#d0d3d8"></div>
<div class="abs" style="left:1217px;top:414px;width:1px;height:173px;background:#d0d3d8"></div>
<div class="abs" style="left:1337px;top:414px;width:1px;height:173px;background:#d0d3d8"></div>
<div class="abs" style="left:1457px;top:414px;width:1px;height:173px;background:#d0d3d8"></div>
<div class="abs" style="left:1577px;top:414px;width:1px;height:173px;background:#d0d3d8"></div>
<div class="abs" style="left:1697px;top:414px;width:1px;height:173px;background:#d0d3d8"></div>
<div class="abs" style="left:1817px;top:414px;width:1px;height:173px;background:#d0d3d8"></div>
<div class="abs" style="left:977px;top:487px;width:880px;height:1px;background:#d5d8dc"></div>
<div class="t" style="left:986px;top:461px;height:20px;line-height:20px;font-size:13px;color:#4f73e3">241 1903test_A...</div>
<div class="t" style="left:1106px;top:461px;height:20px;line-height:20px;font-size:13px;color:#2b2f36">singlestore-ma</div>
<div class="t" style="left:1226px;top:461px;height:20px;line-height:20px;font-size:13px;color:#2b2f36">33069</div>
<div class="abs" style="left:1362px;top:463px;width:72px;height:16px;border:1px solid #4f73e3;border-radius:2px;background:#eef3fd;text-align:center;font-size:11px;line-height:14px;font-weight:bold;color:#2f4b9c">Online</div>
<div class="t" style="left:1466px;top:461px;height:20px;line-height:20px;font-size:13px;color:#2b2f36">MA</div>
<div class="t" style="left:1586px;top:461px;height:20px;line-height:20px;font-size:13px;color:#2b2f36">1</div>
<div class="abs" style="left:977px;top:520px;width:880px;height:1px;background:#d5d8dc"></div>
<div class="t" style="left:986px;top:494px;height:20px;line-height:20px;font-size:13px;color:#4f73e3">241 1903test_L...</div>
<div class="t" style="left:1106px;top:494px;height:20px;line-height:20px;font-size:13px;color:#2b2f36">singlestore-lf1</div>
<div class="t" style="left:1226px;top:494px;height:20px;line-height:20px;font-size:13px;color:#2b2f36">33069</div>
<div class="abs" style="left:1362px;top:496px;width:72px;height:16px;border:1px solid #4f73e3;border-radius:2px;background:#eef3fd;text-align:center;font-size:11px;line-height:14px;font-weight:bold;color:#2f4b9c">Online</div>
<div class="t" style="left:1466px;top:494px;height:20px;line-height:20px;font-size:13px;color:#2b2f36">LEAF</div>
<div class="t" style="left:1586px;top:494px;height:20px;line-height:20px;font-size:13px;color:#2b2f36">2</div>
<div class="t" style="left:1706px;top:494px;height:20px;line-height:20px;font-size:13px;color:#2b2f36">singlestore-lf2</div>
<div class="abs" style="left:977px;top:553px;width:880px;height:1px;background:#d5d8dc"></div>
<div class="t" style="left:986px;top:527px;height:20px;line-height:20px;font-size:13px;color:#4f73e3">241 1903test_L...</div>
<div class="t" style="left:1106px;top:527px;height:20px;line-height:20px;font-size:13px;color:#2b2f36">singlestore-lf2</div>
<div class="t" style="left:1226px;top:527px;height:20px;line-height:20px;font-size:13px;color:#2b2f36">33069</div>
<div class="abs" style="left:1362px;top:529px;width:72px;height:16px;border:1px solid #4f73e3;border-radius:2px;background:#eef3fd;text-align:center;font-size:11px;line-height:14px;font-weight:bold;color:#2f4b9c">Online</div>
<div class="t" style="left:1466px;top:527px;height:20px;line-height:20px;font-size:13px;color:#2b2f36">LEAF</div>
<div class="t" style="left:1586px;top:527px;height:20px;line-height:20px;font-size:13px;color:#2b2f36">3</div>
<div class="t" style="left:1706px;top:527px;height:20px;line-height:20px;font-size:13px;color:#2b2f36">singlestore-lf1</div>
<div class="abs" style="left:977px;top:586px;width:880px;height:1px;background:#d5d8dc"></div>
<div class="t" style="left:986px;top:560px;height:20px;line-height:20px;font-size:13px;color:#4f73e3">241 1903test_A...</div>
<div class="t" style="left:1106px;top:560px;height:20px;line-height:20px;font-size:13px;color:#2b2f36">singlestore-ca</div>
<div class="t" style="left:1226px;top:560px;height:20px;line-height:20px;font-size:13px;color:#2b2f36">33069</div>
<div class="abs" style="left:1362px;top:562px;width:72px;height:16px;border:1px solid #4f73e3;border-radius:2px;background:#eef3fd;text-align:center;font-size:11px;line-height:14px;font-weight:bold;color:#2f4b9c">Online</div>
<div class="t" style="left:1466px;top:560px;height:20px;line-height:20px;font-size:13px;color:#2b2f36">CA</div>
<div class="t" style="left:1586px;top:560px;height:20px;line-height:20px;font-size:13px;color:#2b2f36">4</div>
<div class="abs" style="left:977px;top:908px;width:880px;height:6px;background:#eceef0"></div>
<div class="abs" style="left:987px;top:908px;width:369px;height:6px;background:#d3d6da;border-radius:3px"></div>
<div class="abs" style="left:977px;top:926px;width:880px;height:86px;border:1px solid #d0d3d8;border-radius:2px"></div>
<div class="abs" style="left:978px;top:927px;width:878px;height:32px;background:#eceff2;border-bottom:1px solid #d0d3d8"></div>
<div class="t b" style="left:990px;top:933px;height:20px;line-height:20px;font-size:11.3px;color:#2b2f36">User Tags</div>
<div class="t" style="left:994px;top:971px;height:20px;line-height:20px;font-size:12px;color:#2b2f36">DB</div>
<div class="abs" style="left:1136px;top:971px;width:30px;height:18px;background:#e3e6e9;border-radius:2px"></div>
<svg class="abs" style="left:1142px;top:975px" width="18" height="10"><path d="M1 2 H4 V8 H1 Z M5.5 1 V9 M5.5 5 H6.5 M7 1 V9 M9.5 2 H15 V9" fill="none" stroke="#2b2f36" stroke-width="1.1"/></svg>
<div class="abs" style="left:939px;top:426px;width:28px;height:199px;background:#5081f0;border-radius:4px 0 0 4px"></div>
<div class="abs" style="left:939px;top:526px;width:28px;height:1px;background:#7fa2f4"></div>
<div class="t b" style="left:953px;top:464px;font-size:11px;line-height:14px;height:14px;color:#fff;transform:translate(-50%,-50%) rotate(-90deg)">Expand</div>
<svg class="abs" style="left:948px;top:492px" width="10" height="12"><path d="M7.5 1.5 L3 6 L7.5 10.5" fill="none" stroke="#fff" stroke-width="1.7"/></svg>
<div class="t b" style="left:953px;top:564px;font-size:11px;line-height:14px;height:14px;color:#fff;transform:translate(-50%,-50%) rotate(-90deg)">Collapse</div>
<svg class="abs" style="left:948px;top:597px" width="10" height="12"><path d="M2.5 1.5 L7 6 L2.5 10.5" fill="none" stroke="#fff" stroke-width="1.7"/></svg>
<div class="abs" style="left:949.0px;top:72.0px;width:38.4px;height:38.4px;border-radius:50%;background:#fff;box-shadow:0.6px 0.8px 1.2px rgba(0,0,0,0.38)"></div>
<div class="abs" style="left:951.9000000000001px;top:74.9px;width:32.6px;height:32.6px;border-radius:50%;background:#d9603f"></div>
<svg class="abs" style="left:948.2px;top:71.2px" width="40" height="40"><path d="M24 12.1 L24 27.8 L21 27.8 L21 15.7 L16.4 17.3 L16.4 14.7 L20.6 12.1Z" fill="#fff"/></svg>
<div class="abs" style="left:950.9px;top:317.6px;width:38.4px;height:38.4px;border-radius:50%;background:#fff;box-shadow:0.6px 0.8px 1.2px rgba(0,0,0,0.38)"></div>
<div class="abs" style="left:953.8000000000001px;top:320.5px;width:32.6px;height:32.6px;border-radius:50%;background:#d9603f"></div>
<div class="t b" style="left:954.6px;top:323.8px;width:33px;height:26px;line-height:26px;text-align:center;font-size:22.3px;color:#fff">2</div>
<div class="abs" style="left:954.8px;top:902.9px;width:38.4px;height:38.4px;border-radius:50%;background:#fff;box-shadow:0.6px 0.8px 1.2px rgba(0,0,0,0.38)"></div>
<div class="abs" style="left:957.7px;top:905.8000000000001px;width:32.6px;height:32.6px;border-radius:50%;background:#d9603f"></div>
<div class="t b" style="left:958.5px;top:909.1px;width:33px;height:26px;line-height:26px;text-align:center;font-size:22.3px;color:#fff">3</div>
</body></html>
